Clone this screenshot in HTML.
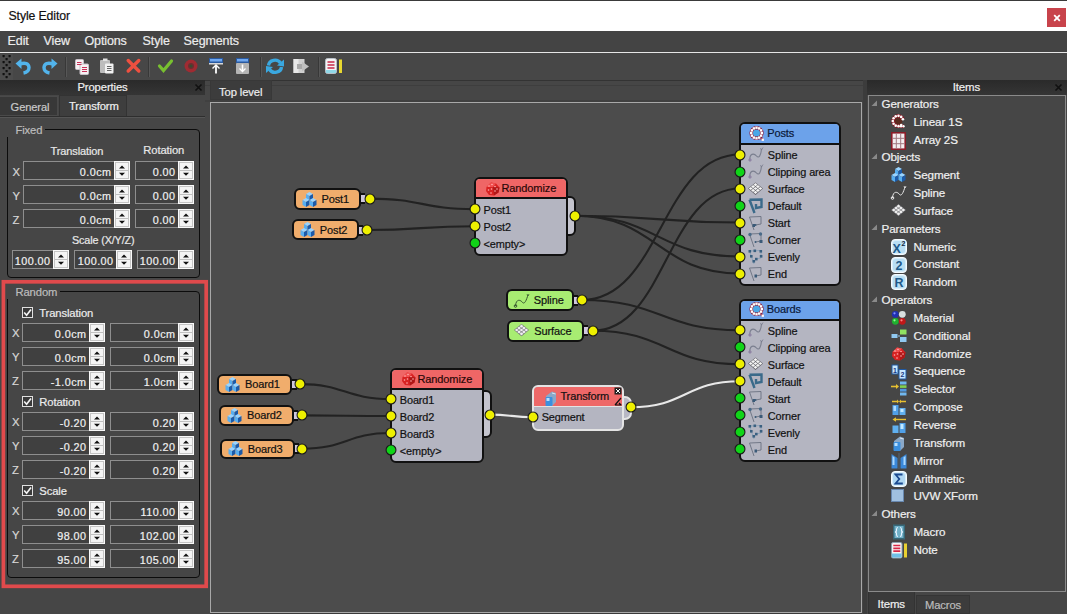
<!DOCTYPE html>
<html><head><meta charset="utf-8"><style>
html,body{margin:0;padding:0;}
body{width:1067px;height:614px;overflow:hidden;position:relative;background:#464646;font-family:"Liberation Sans", sans-serif;}
.t{position:absolute;white-space:nowrap;line-height:1;}
div{box-sizing:border-box;}
svg{position:absolute;overflow:visible;}
</style></head><body>

<div style="position:absolute;left:0px;top:0px;width:1067px;height:31px;background:#ffffff;border-top:1px solid #3a3a3a;"></div>
<div class="t" style="left:8.5px;top:9.8px;font-size:12.30px;letter-spacing:-0.12px;-webkit-text-stroke:0.2px #111;color:#111;">Style Editor</div>
<div style="position:absolute;left:1047px;top:8px;width:19px;height:19px;background:#c8434b;"></div>
<svg style="left:1053px;top:14px" width="8" height="8"><path d="M1.2 1.2L6.8 6.8M6.8 1.2L1.2 6.8" stroke="#fff" stroke-width="1.8"/></svg>
<div style="position:absolute;left:0px;top:31px;width:1067px;height:21px;background:#444444;"></div>
<div class="t" style="left:7.6px;top:35.0px;font-size:12.51px;letter-spacing:-0.12px;-webkit-text-stroke:0.2px #ececec;color:#ececec;">Edit</div>
<div class="t" style="left:43.5px;top:35.0px;font-size:12.51px;letter-spacing:-0.12px;-webkit-text-stroke:0.2px #ececec;color:#ececec;">View</div>
<div class="t" style="left:84.5px;top:35.0px;font-size:12.51px;letter-spacing:-0.12px;-webkit-text-stroke:0.2px #ececec;color:#ececec;">Options</div>
<div class="t" style="left:142.6px;top:35.0px;font-size:12.51px;letter-spacing:-0.12px;-webkit-text-stroke:0.2px #ececec;color:#ececec;">Style</div>
<div class="t" style="left:183.6px;top:35.0px;font-size:12.51px;letter-spacing:-0.12px;-webkit-text-stroke:0.2px #ececec;color:#ececec;">Segments</div>
<div style="position:absolute;left:0px;top:52px;width:1067px;height:1px;background:#e6e6e6;"></div>
<div style="position:absolute;left:0px;top:53px;width:1067px;height:27px;background:#474747;"></div>
<svg style="left:0px;top:54px" width="14" height="26"><rect x="0" y="0" width="13" height="26" fill="#4c4c4c"/><rect x="2.5" y="1" width="2.2" height="2.2" rx="0.6" fill="#111"/><rect x="8.5" y="1" width="2.2" height="2.2" rx="0.6" fill="#111"/><rect x="5.5" y="4" width="2.2" height="2.2" rx="0.6" fill="#111"/><rect x="2.5" y="7" width="2.2" height="2.2" rx="0.6" fill="#111"/><rect x="8.5" y="7" width="2.2" height="2.2" rx="0.6" fill="#111"/><rect x="5.5" y="10" width="2.2" height="2.2" rx="0.6" fill="#111"/><rect x="2.5" y="13" width="2.2" height="2.2" rx="0.6" fill="#111"/><rect x="8.5" y="13" width="2.2" height="2.2" rx="0.6" fill="#111"/><rect x="5.5" y="16" width="2.2" height="2.2" rx="0.6" fill="#111"/><rect x="2.5" y="19" width="2.2" height="2.2" rx="0.6" fill="#111"/><rect x="8.5" y="19" width="2.2" height="2.2" rx="0.6" fill="#111"/><rect x="5.5" y="22" width="2.2" height="2.2" rx="0.6" fill="#111"/></svg>
<div style="position:absolute;left:65px;top:57px;width:1px;height:20px;background:#383838;"></div>
<div style="position:absolute;left:66px;top:57px;width:1px;height:20px;background:#575757;"></div>
<div style="position:absolute;left:148px;top:57px;width:1px;height:20px;background:#383838;"></div>
<div style="position:absolute;left:149px;top:57px;width:1px;height:20px;background:#575757;"></div>
<div style="position:absolute;left:260px;top:57px;width:1px;height:20px;background:#383838;"></div>
<div style="position:absolute;left:261px;top:57px;width:1px;height:20px;background:#575757;"></div>
<div style="position:absolute;left:318px;top:57px;width:1px;height:20px;background:#383838;"></div>
<div style="position:absolute;left:319px;top:57px;width:1px;height:20px;background:#575757;"></div>
<svg style="left:15px;top:58px" width="17" height="17"><path d="M4.5 6 Q13.5 3.5 14 9.5 Q14 14 8.5 15" fill="none" stroke="#52b4ec" stroke-width="3.4"/><path d="M0.5 5.5 L6.5 0.5 L6.5 11 Z" fill="#52b4ec"/></svg>
<svg style="left:41px;top:58px" width="17" height="17"><path d="M12.5 6 Q3.5 3.5 3 9.5 Q3 14 8.5 15" fill="none" stroke="#52b4ec" stroke-width="3.4"/><path d="M16.5 5.5 L10.5 0.5 L10.5 11 Z" fill="#52b4ec"/></svg>
<svg style="left:75px;top:59px" width="14" height="16"><rect x="0.5" y="0.5" width="8" height="10" rx="1" fill="#f6f2f4" stroke="#c8c0c8"/><rect x="5" y="5" width="8.5" height="10.5" rx="1" fill="#f6f2f4" stroke="#c8c0c8"/><path d="M2 3.5h4.5M2 5.5h4.5M7 8.5h5M7 10.5h5M7 12.5h5" stroke="#c83058" stroke-width="1.1"/></svg>
<svg style="left:99px;top:58px" width="16" height="17"><rect x="1" y="2" width="10" height="13" rx="1" fill="#bdbdbd"/><rect x="4" y="0.5" width="4.5" height="2.5" fill="#e0e0e0"/><rect x="6" y="5.5" width="8.5" height="10" rx="1" fill="#f2f2f2"/><path d="M8 8.5h4.5M8 10.5h4.5M8 12.5h4.5" stroke="#555" stroke-width="0.9"/></svg>
<svg style="left:126px;top:58px" width="15" height="15"><path d="M2.2 2.5 L12.8 13 M12.8 2.5 L2.2 13" stroke="#ee5040" stroke-width="3.4" stroke-linecap="round"/></svg>
<svg style="left:158px;top:59px" width="15" height="14"><path d="M1.5 7 L5.5 11.5 L13.5 2" fill="none" stroke="#78c030" stroke-width="3.2" stroke-linecap="round"/></svg>
<svg style="left:183px;top:58px" width="16" height="16"><circle cx="8" cy="8" r="6.5" fill="#a82830" opacity="0.9"/><circle cx="8" cy="8" r="3" fill="#6a3030"/><circle cx="8" cy="8" r="1.5" fill="#3a4a30"/></svg>
<svg style="left:209px;top:58px" width="14" height="16"><rect x="0" y="0" width="14" height="5" fill="#2a5aa0"/><rect x="1" y="1" width="12" height="2.5" fill="#70a8f0"/><rect x="0" y="5" width="14" height="1.5" fill="#d8d8d8"/><path d="M7 8 V15.5" stroke="#fff" stroke-width="1.8"/><path d="M3.5 10.5 L7 7 L10.5 10.5" stroke="#fff" stroke-width="1.4" fill="none"/></svg>
<svg style="left:236px;top:58px" width="13" height="16"><rect x="0" y="0" width="13" height="5" fill="#2a5aa0"/><rect x="1" y="1" width="11" height="2.5" fill="#70a8f0"/><rect x="0" y="5" width="13" height="11" rx="1" fill="#b4b4b4"/><path d="M6.5 6.5 V13" stroke="#fff" stroke-width="1.6"/><path d="M3.5 10.5 L6.5 13.5 L9.5 10.5" stroke="#fff" stroke-width="1.3" fill="none"/></svg>
<svg style="left:265px;top:57px" width="20" height="18"><path d="M3.5 8.5 A6.5 6 0 0 1 15.5 6" fill="none" stroke="#3aa8e0" stroke-width="3.4"/><path d="M16.5 10 A6.5 6 0 0 1 4.5 12.5" fill="none" stroke="#3aa8e0" stroke-width="3.4"/><path d="M19 2.5 L19 9.5 L12 8.5 Z" fill="#3aa8e0"/><path d="M1 16 L1 9 L8 10 Z" fill="#3aa8e0"/></svg>
<svg style="left:293px;top:58px" width="18" height="17"><rect x="0.5" y="1" width="11" height="14" fill="#d0d0d0"/><rect x="0.5" y="1" width="5" height="14" fill="#e8e8e8"/><rect x="4" y="6" width="5" height="5" fill="#a8a8a8"/><path d="M9 3.5 L16 8.5 L9 13.5 Z" fill="#c0c0c0"/></svg>
<svg style="left:325px;top:58px" width="18" height="17"><rect x="0.5" y="0.5" width="11" height="15" rx="2" fill="#f4f4f4" stroke="#b8c0c8"/><path d="M2.5 4h7M2.5 7h7M2.5 10h7" stroke="#c82848" stroke-width="1.7"/><rect x="1" y="12" width="10" height="3" fill="#90d8e8"/><rect x="14" y="1.5" width="3" height="13.5" fill="#e8d830"/></svg>
<div style="position:absolute;left:0px;top:80px;width:205px;height:15px;background:linear-gradient(#2a2a2a,#353535);"></div>
<div class="t" style="left:77.5px;top:82.1px;font-size:11.24px;letter-spacing:-0.12px;-webkit-text-stroke:0.2px #f0f0f0;color:#f0f0f0;">Properties</div>
<svg style="left:195px;top:84px" width="7" height="7"><path d="M0.5 0.5L6.5 6.5M6.5 0.5L0.5 6.5" stroke="#111" stroke-width="1.6"/></svg>
<div style="position:absolute;left:0px;top:96px;width:58px;height:20px;background:#383838;border:1px solid #4a4a4a;border-left:none;"></div>
<div class="t" style="left:10.6px;top:101.9px;font-size:11.13px;letter-spacing:-0.12px;-webkit-text-stroke:0.2px #c8c8c8;color:#c8c8c8;">General</div>
<div style="position:absolute;left:59px;top:95px;width:68px;height:22px;background:#3e3e3e;border:1px solid #333;"></div>
<div class="t" style="left:69.0px;top:100.8px;font-size:11.24px;letter-spacing:-0.12px;-webkit-text-stroke:0.2px #f0f0f0;color:#f0f0f0;">Transform</div>
<div style="position:absolute;left:0px;top:116px;width:205px;height:1px;background:#2e2e2e;"></div>
<div style="position:absolute;left:0px;top:117px;width:205px;height:1px;background:#555555;"></div>
<div style="position:absolute;left:7px;top:129px;width:193px;height:149px;border:1px solid #0c0c0c;border-radius:4px;"></div>
<div class="t" style="left:15.4px;top:124.5px;font-size:11.24px;letter-spacing:-0.12px;-webkit-text-stroke:0.2px #bdbdbd;color:#bdbdbd;background:#464646;padding:1px 3px 1px 9px;margin-left:-9px;margin-top:-1px;">Fixed</div>
<div class="t" style="left:50.6px;top:145.7px;font-size:11.02px;letter-spacing:-0.12px;-webkit-text-stroke:0.2px #e8e8e8;color:#e8e8e8;">Translation</div>
<div class="t" style="left:143.3px;top:145.3px;font-size:11.24px;letter-spacing:-0.12px;-webkit-text-stroke:0.2px #e8e8e8;color:#e8e8e8;">Rotation</div>
<div class="t" style="left:12.5px;top:166.5px;font-size:11.24px;letter-spacing:-0.12px;-webkit-text-stroke:0.2px #d8d8d8;color:#d8d8d8;">X</div>
<div style="position:absolute;left:23px;top:161px;width:107px;height:19px;background:#404040;border:1px solid #8e8e8e;"></div>
<div style="position:absolute;left:114px;top:161px;width:16px;height:19px;background:#f4f4f4;border:1px solid #fafafa;"></div>
<div style="position:absolute;left:115px;top:162px;width:14px;height:17px;border:1px solid #c4c4c4;"></div>
<div style="position:absolute;left:116px;top:170px;width:12px;height:1px;background:#c0c0c0;"></div>
<svg style="left:119px;top:165px" width="6" height="12"><path d="M0 3.6 L3 0.6 L6 3.6 Z M0 7.8 L3 10.8 L6 7.8 Z" fill="#111"/></svg>
<div class="t" style="right:955.5px;top:167.2px;font-size:10.8px;letter-spacing:0.45px;-webkit-text-stroke:0.2px #f0f0f0;color:#f0f0f0;">0.0cm</div>
<div style="position:absolute;left:135px;top:161px;width:59px;height:19px;background:#404040;border:1px solid #8e8e8e;"></div>
<div style="position:absolute;left:178px;top:161px;width:16px;height:19px;background:#f4f4f4;border:1px solid #fafafa;"></div>
<div style="position:absolute;left:179px;top:162px;width:14px;height:17px;border:1px solid #c4c4c4;"></div>
<div style="position:absolute;left:180px;top:170px;width:12px;height:1px;background:#c0c0c0;"></div>
<svg style="left:183px;top:165px" width="6" height="12"><path d="M0 3.6 L3 0.6 L6 3.6 Z M0 7.8 L3 10.8 L6 7.8 Z" fill="#111"/></svg>
<div class="t" style="right:891.5px;top:167.2px;font-size:10.8px;letter-spacing:0.45px;-webkit-text-stroke:0.2px #f0f0f0;color:#f0f0f0;">0.00</div>
<div class="t" style="left:12.5px;top:190.5px;font-size:11.24px;letter-spacing:-0.12px;-webkit-text-stroke:0.2px #d8d8d8;color:#d8d8d8;">Y</div>
<div style="position:absolute;left:23px;top:185px;width:107px;height:19px;background:#404040;border:1px solid #8e8e8e;"></div>
<div style="position:absolute;left:114px;top:185px;width:16px;height:19px;background:#f4f4f4;border:1px solid #fafafa;"></div>
<div style="position:absolute;left:115px;top:186px;width:14px;height:17px;border:1px solid #c4c4c4;"></div>
<div style="position:absolute;left:116px;top:194px;width:12px;height:1px;background:#c0c0c0;"></div>
<svg style="left:119px;top:189px" width="6" height="12"><path d="M0 3.6 L3 0.6 L6 3.6 Z M0 7.8 L3 10.8 L6 7.8 Z" fill="#111"/></svg>
<div class="t" style="right:955.5px;top:191.2px;font-size:10.8px;letter-spacing:0.45px;-webkit-text-stroke:0.2px #f0f0f0;color:#f0f0f0;">0.0cm</div>
<div style="position:absolute;left:135px;top:185px;width:59px;height:19px;background:#404040;border:1px solid #8e8e8e;"></div>
<div style="position:absolute;left:178px;top:185px;width:16px;height:19px;background:#f4f4f4;border:1px solid #fafafa;"></div>
<div style="position:absolute;left:179px;top:186px;width:14px;height:17px;border:1px solid #c4c4c4;"></div>
<div style="position:absolute;left:180px;top:194px;width:12px;height:1px;background:#c0c0c0;"></div>
<svg style="left:183px;top:189px" width="6" height="12"><path d="M0 3.6 L3 0.6 L6 3.6 Z M0 7.8 L3 10.8 L6 7.8 Z" fill="#111"/></svg>
<div class="t" style="right:891.5px;top:191.2px;font-size:10.8px;letter-spacing:0.45px;-webkit-text-stroke:0.2px #f0f0f0;color:#f0f0f0;">0.00</div>
<div class="t" style="left:12.5px;top:214.5px;font-size:11.24px;letter-spacing:-0.12px;-webkit-text-stroke:0.2px #d8d8d8;color:#d8d8d8;">Z</div>
<div style="position:absolute;left:23px;top:209px;width:107px;height:19px;background:#404040;border:1px solid #8e8e8e;"></div>
<div style="position:absolute;left:114px;top:209px;width:16px;height:19px;background:#f4f4f4;border:1px solid #fafafa;"></div>
<div style="position:absolute;left:115px;top:210px;width:14px;height:17px;border:1px solid #c4c4c4;"></div>
<div style="position:absolute;left:116px;top:218px;width:12px;height:1px;background:#c0c0c0;"></div>
<svg style="left:119px;top:213px" width="6" height="12"><path d="M0 3.6 L3 0.6 L6 3.6 Z M0 7.8 L3 10.8 L6 7.8 Z" fill="#111"/></svg>
<div class="t" style="right:955.5px;top:215.2px;font-size:10.8px;letter-spacing:0.45px;-webkit-text-stroke:0.2px #f0f0f0;color:#f0f0f0;">0.0cm</div>
<div style="position:absolute;left:135px;top:209px;width:59px;height:19px;background:#404040;border:1px solid #8e8e8e;"></div>
<div style="position:absolute;left:178px;top:209px;width:16px;height:19px;background:#f4f4f4;border:1px solid #fafafa;"></div>
<div style="position:absolute;left:179px;top:210px;width:14px;height:17px;border:1px solid #c4c4c4;"></div>
<div style="position:absolute;left:180px;top:218px;width:12px;height:1px;background:#c0c0c0;"></div>
<svg style="left:183px;top:213px" width="6" height="12"><path d="M0 3.6 L3 0.6 L6 3.6 Z M0 7.8 L3 10.8 L6 7.8 Z" fill="#111"/></svg>
<div class="t" style="right:891.5px;top:215.2px;font-size:10.8px;letter-spacing:0.45px;-webkit-text-stroke:0.2px #f0f0f0;color:#f0f0f0;">0.00</div>
<div class="t" style="left:71.9px;top:234.5px;font-size:10.81px;letter-spacing:-0.12px;-webkit-text-stroke:0.2px #e8e8e8;color:#e8e8e8;">Scale (X/Y/Z)</div>
<div style="position:absolute;left:12px;top:250px;width:57px;height:19px;background:#404040;border:1px solid #8e8e8e;"></div>
<div style="position:absolute;left:53px;top:250px;width:16px;height:19px;background:#f4f4f4;border:1px solid #fafafa;"></div>
<div style="position:absolute;left:54px;top:251px;width:14px;height:17px;border:1px solid #c4c4c4;"></div>
<div style="position:absolute;left:55px;top:259px;width:12px;height:1px;background:#c0c0c0;"></div>
<svg style="left:58px;top:254px" width="6" height="12"><path d="M0 3.6 L3 0.6 L6 3.6 Z M0 7.8 L3 10.8 L6 7.8 Z" fill="#111"/></svg>
<div class="t" style="right:1016.5px;top:256.2px;font-size:10.8px;letter-spacing:0.45px;-webkit-text-stroke:0.2px #f0f0f0;color:#f0f0f0;">100.00</div>
<div style="position:absolute;left:74px;top:250px;width:58px;height:19px;background:#404040;border:1px solid #8e8e8e;"></div>
<div style="position:absolute;left:116px;top:250px;width:16px;height:19px;background:#f4f4f4;border:1px solid #fafafa;"></div>
<div style="position:absolute;left:117px;top:251px;width:14px;height:17px;border:1px solid #c4c4c4;"></div>
<div style="position:absolute;left:118px;top:259px;width:12px;height:1px;background:#c0c0c0;"></div>
<svg style="left:121px;top:254px" width="6" height="12"><path d="M0 3.6 L3 0.6 L6 3.6 Z M0 7.8 L3 10.8 L6 7.8 Z" fill="#111"/></svg>
<div class="t" style="right:953.5px;top:256.2px;font-size:10.8px;letter-spacing:0.45px;-webkit-text-stroke:0.2px #f0f0f0;color:#f0f0f0;">100.00</div>
<div style="position:absolute;left:137px;top:250px;width:57px;height:19px;background:#404040;border:1px solid #8e8e8e;"></div>
<div style="position:absolute;left:178px;top:250px;width:16px;height:19px;background:#f4f4f4;border:1px solid #fafafa;"></div>
<div style="position:absolute;left:179px;top:251px;width:14px;height:17px;border:1px solid #c4c4c4;"></div>
<div style="position:absolute;left:180px;top:259px;width:12px;height:1px;background:#c0c0c0;"></div>
<svg style="left:183px;top:254px" width="6" height="12"><path d="M0 3.6 L3 0.6 L6 3.6 Z M0 7.8 L3 10.8 L6 7.8 Z" fill="#111"/></svg>
<div class="t" style="right:891.5px;top:256.2px;font-size:10.8px;letter-spacing:0.45px;-webkit-text-stroke:0.2px #f0f0f0;color:#f0f0f0;">100.00</div>
<div style="position:absolute;left:7px;top:291px;width:193px;height:287px;border:1px solid #0c0c0c;border-radius:4px;"></div>
<div class="t" style="left:15.5px;top:287.1px;font-size:11.24px;letter-spacing:-0.12px;-webkit-text-stroke:0.2px #bdbdbd;color:#bdbdbd;background:#464646;padding:1px 3px 1px 9px;margin-left:-9px;margin-top:-1px;">Random</div>
<div style="position:absolute;left:22px;top:307px;width:11px;height:11px;border:1px solid #e0e0e0;background:#3a3a3a;"></div>
<svg style="left:23px;top:308px" width="9" height="9"><path d="M1.2 4.5 L3.6 7.2 L8 1.5" fill="none" stroke="#f4f4f4" stroke-width="1.7"/></svg>
<div class="t" style="left:39.3px;top:308.1px;font-size:11.24px;letter-spacing:-0.12px;-webkit-text-stroke:0.2px #ececec;color:#ececec;">Translation</div>
<div class="t" style="left:12.0px;top:328.3px;font-size:11.24px;letter-spacing:-0.12px;-webkit-text-stroke:0.2px #d8d8d8;color:#d8d8d8;">X</div>
<div style="position:absolute;left:22px;top:323px;width:83px;height:19px;background:#404040;border:1px solid #8e8e8e;"></div>
<div style="position:absolute;left:89px;top:323px;width:16px;height:19px;background:#f4f4f4;border:1px solid #fafafa;"></div>
<div style="position:absolute;left:90px;top:324px;width:14px;height:17px;border:1px solid #c4c4c4;"></div>
<div style="position:absolute;left:91px;top:332px;width:12px;height:1px;background:#c0c0c0;"></div>
<svg style="left:94px;top:327px" width="6" height="12"><path d="M0 3.6 L3 0.6 L6 3.6 Z M0 7.8 L3 10.8 L6 7.8 Z" fill="#111"/></svg>
<div class="t" style="right:980.5px;top:329.2px;font-size:10.8px;letter-spacing:0.45px;-webkit-text-stroke:0.2px #f0f0f0;color:#f0f0f0;">0.0cm</div>
<div style="position:absolute;left:110px;top:323px;width:84px;height:19px;background:#404040;border:1px solid #8e8e8e;"></div>
<div style="position:absolute;left:178px;top:323px;width:16px;height:19px;background:#f4f4f4;border:1px solid #fafafa;"></div>
<div style="position:absolute;left:179px;top:324px;width:14px;height:17px;border:1px solid #c4c4c4;"></div>
<div style="position:absolute;left:180px;top:332px;width:12px;height:1px;background:#c0c0c0;"></div>
<svg style="left:183px;top:327px" width="6" height="12"><path d="M0 3.6 L3 0.6 L6 3.6 Z M0 7.8 L3 10.8 L6 7.8 Z" fill="#111"/></svg>
<div class="t" style="right:891.5px;top:329.2px;font-size:10.8px;letter-spacing:0.45px;-webkit-text-stroke:0.2px #f0f0f0;color:#f0f0f0;">0.0cm</div>
<div class="t" style="left:12.0px;top:352.3px;font-size:11.24px;letter-spacing:-0.12px;-webkit-text-stroke:0.2px #d8d8d8;color:#d8d8d8;">Y</div>
<div style="position:absolute;left:22px;top:347px;width:83px;height:19px;background:#404040;border:1px solid #8e8e8e;"></div>
<div style="position:absolute;left:89px;top:347px;width:16px;height:19px;background:#f4f4f4;border:1px solid #fafafa;"></div>
<div style="position:absolute;left:90px;top:348px;width:14px;height:17px;border:1px solid #c4c4c4;"></div>
<div style="position:absolute;left:91px;top:356px;width:12px;height:1px;background:#c0c0c0;"></div>
<svg style="left:94px;top:351px" width="6" height="12"><path d="M0 3.6 L3 0.6 L6 3.6 Z M0 7.8 L3 10.8 L6 7.8 Z" fill="#111"/></svg>
<div class="t" style="right:980.5px;top:353.2px;font-size:10.8px;letter-spacing:0.45px;-webkit-text-stroke:0.2px #f0f0f0;color:#f0f0f0;">0.0cm</div>
<div style="position:absolute;left:110px;top:347px;width:84px;height:19px;background:#404040;border:1px solid #8e8e8e;"></div>
<div style="position:absolute;left:178px;top:347px;width:16px;height:19px;background:#f4f4f4;border:1px solid #fafafa;"></div>
<div style="position:absolute;left:179px;top:348px;width:14px;height:17px;border:1px solid #c4c4c4;"></div>
<div style="position:absolute;left:180px;top:356px;width:12px;height:1px;background:#c0c0c0;"></div>
<svg style="left:183px;top:351px" width="6" height="12"><path d="M0 3.6 L3 0.6 L6 3.6 Z M0 7.8 L3 10.8 L6 7.8 Z" fill="#111"/></svg>
<div class="t" style="right:891.5px;top:353.2px;font-size:10.8px;letter-spacing:0.45px;-webkit-text-stroke:0.2px #f0f0f0;color:#f0f0f0;">0.0cm</div>
<div class="t" style="left:12.0px;top:376.3px;font-size:11.24px;letter-spacing:-0.12px;-webkit-text-stroke:0.2px #d8d8d8;color:#d8d8d8;">Z</div>
<div style="position:absolute;left:22px;top:371px;width:83px;height:19px;background:#404040;border:1px solid #8e8e8e;"></div>
<div style="position:absolute;left:89px;top:371px;width:16px;height:19px;background:#f4f4f4;border:1px solid #fafafa;"></div>
<div style="position:absolute;left:90px;top:372px;width:14px;height:17px;border:1px solid #c4c4c4;"></div>
<div style="position:absolute;left:91px;top:380px;width:12px;height:1px;background:#c0c0c0;"></div>
<svg style="left:94px;top:375px" width="6" height="12"><path d="M0 3.6 L3 0.6 L6 3.6 Z M0 7.8 L3 10.8 L6 7.8 Z" fill="#111"/></svg>
<div class="t" style="right:980.5px;top:377.2px;font-size:10.8px;letter-spacing:0.45px;-webkit-text-stroke:0.2px #f0f0f0;color:#f0f0f0;">-1.0cm</div>
<div style="position:absolute;left:110px;top:371px;width:84px;height:19px;background:#404040;border:1px solid #8e8e8e;"></div>
<div style="position:absolute;left:178px;top:371px;width:16px;height:19px;background:#f4f4f4;border:1px solid #fafafa;"></div>
<div style="position:absolute;left:179px;top:372px;width:14px;height:17px;border:1px solid #c4c4c4;"></div>
<div style="position:absolute;left:180px;top:380px;width:12px;height:1px;background:#c0c0c0;"></div>
<svg style="left:183px;top:375px" width="6" height="12"><path d="M0 3.6 L3 0.6 L6 3.6 Z M0 7.8 L3 10.8 L6 7.8 Z" fill="#111"/></svg>
<div class="t" style="right:891.5px;top:377.2px;font-size:10.8px;letter-spacing:0.45px;-webkit-text-stroke:0.2px #f0f0f0;color:#f0f0f0;">1.0cm</div>
<div style="position:absolute;left:22px;top:396px;width:11px;height:11px;border:1px solid #e0e0e0;background:#3a3a3a;"></div>
<svg style="left:23px;top:397px" width="9" height="9"><path d="M1.2 4.5 L3.6 7.2 L8 1.5" fill="none" stroke="#f4f4f4" stroke-width="1.7"/></svg>
<div class="t" style="left:39.3px;top:397.1px;font-size:11.24px;letter-spacing:-0.12px;-webkit-text-stroke:0.2px #ececec;color:#ececec;">Rotation</div>
<div class="t" style="left:12.0px;top:417.3px;font-size:11.24px;letter-spacing:-0.12px;-webkit-text-stroke:0.2px #d8d8d8;color:#d8d8d8;">X</div>
<div style="position:absolute;left:22px;top:412px;width:83px;height:19px;background:#404040;border:1px solid #8e8e8e;"></div>
<div style="position:absolute;left:89px;top:412px;width:16px;height:19px;background:#f4f4f4;border:1px solid #fafafa;"></div>
<div style="position:absolute;left:90px;top:413px;width:14px;height:17px;border:1px solid #c4c4c4;"></div>
<div style="position:absolute;left:91px;top:421px;width:12px;height:1px;background:#c0c0c0;"></div>
<svg style="left:94px;top:416px" width="6" height="12"><path d="M0 3.6 L3 0.6 L6 3.6 Z M0 7.8 L3 10.8 L6 7.8 Z" fill="#111"/></svg>
<div class="t" style="right:980.5px;top:418.2px;font-size:10.8px;letter-spacing:0.45px;-webkit-text-stroke:0.2px #f0f0f0;color:#f0f0f0;">-0.20</div>
<div style="position:absolute;left:110px;top:412px;width:84px;height:19px;background:#404040;border:1px solid #8e8e8e;"></div>
<div style="position:absolute;left:178px;top:412px;width:16px;height:19px;background:#f4f4f4;border:1px solid #fafafa;"></div>
<div style="position:absolute;left:179px;top:413px;width:14px;height:17px;border:1px solid #c4c4c4;"></div>
<div style="position:absolute;left:180px;top:421px;width:12px;height:1px;background:#c0c0c0;"></div>
<svg style="left:183px;top:416px" width="6" height="12"><path d="M0 3.6 L3 0.6 L6 3.6 Z M0 7.8 L3 10.8 L6 7.8 Z" fill="#111"/></svg>
<div class="t" style="right:891.5px;top:418.2px;font-size:10.8px;letter-spacing:0.45px;-webkit-text-stroke:0.2px #f0f0f0;color:#f0f0f0;">0.20</div>
<div class="t" style="left:12.0px;top:441.3px;font-size:11.24px;letter-spacing:-0.12px;-webkit-text-stroke:0.2px #d8d8d8;color:#d8d8d8;">Y</div>
<div style="position:absolute;left:22px;top:436px;width:83px;height:19px;background:#404040;border:1px solid #8e8e8e;"></div>
<div style="position:absolute;left:89px;top:436px;width:16px;height:19px;background:#f4f4f4;border:1px solid #fafafa;"></div>
<div style="position:absolute;left:90px;top:437px;width:14px;height:17px;border:1px solid #c4c4c4;"></div>
<div style="position:absolute;left:91px;top:445px;width:12px;height:1px;background:#c0c0c0;"></div>
<svg style="left:94px;top:440px" width="6" height="12"><path d="M0 3.6 L3 0.6 L6 3.6 Z M0 7.8 L3 10.8 L6 7.8 Z" fill="#111"/></svg>
<div class="t" style="right:980.5px;top:442.2px;font-size:10.8px;letter-spacing:0.45px;-webkit-text-stroke:0.2px #f0f0f0;color:#f0f0f0;">-0.20</div>
<div style="position:absolute;left:110px;top:436px;width:84px;height:19px;background:#404040;border:1px solid #8e8e8e;"></div>
<div style="position:absolute;left:178px;top:436px;width:16px;height:19px;background:#f4f4f4;border:1px solid #fafafa;"></div>
<div style="position:absolute;left:179px;top:437px;width:14px;height:17px;border:1px solid #c4c4c4;"></div>
<div style="position:absolute;left:180px;top:445px;width:12px;height:1px;background:#c0c0c0;"></div>
<svg style="left:183px;top:440px" width="6" height="12"><path d="M0 3.6 L3 0.6 L6 3.6 Z M0 7.8 L3 10.8 L6 7.8 Z" fill="#111"/></svg>
<div class="t" style="right:891.5px;top:442.2px;font-size:10.8px;letter-spacing:0.45px;-webkit-text-stroke:0.2px #f0f0f0;color:#f0f0f0;">0.20</div>
<div class="t" style="left:12.0px;top:465.3px;font-size:11.24px;letter-spacing:-0.12px;-webkit-text-stroke:0.2px #d8d8d8;color:#d8d8d8;">Z</div>
<div style="position:absolute;left:22px;top:460px;width:83px;height:19px;background:#404040;border:1px solid #8e8e8e;"></div>
<div style="position:absolute;left:89px;top:460px;width:16px;height:19px;background:#f4f4f4;border:1px solid #fafafa;"></div>
<div style="position:absolute;left:90px;top:461px;width:14px;height:17px;border:1px solid #c4c4c4;"></div>
<div style="position:absolute;left:91px;top:469px;width:12px;height:1px;background:#c0c0c0;"></div>
<svg style="left:94px;top:464px" width="6" height="12"><path d="M0 3.6 L3 0.6 L6 3.6 Z M0 7.8 L3 10.8 L6 7.8 Z" fill="#111"/></svg>
<div class="t" style="right:980.5px;top:466.2px;font-size:10.8px;letter-spacing:0.45px;-webkit-text-stroke:0.2px #f0f0f0;color:#f0f0f0;">-0.20</div>
<div style="position:absolute;left:110px;top:460px;width:84px;height:19px;background:#404040;border:1px solid #8e8e8e;"></div>
<div style="position:absolute;left:178px;top:460px;width:16px;height:19px;background:#f4f4f4;border:1px solid #fafafa;"></div>
<div style="position:absolute;left:179px;top:461px;width:14px;height:17px;border:1px solid #c4c4c4;"></div>
<div style="position:absolute;left:180px;top:469px;width:12px;height:1px;background:#c0c0c0;"></div>
<svg style="left:183px;top:464px" width="6" height="12"><path d="M0 3.6 L3 0.6 L6 3.6 Z M0 7.8 L3 10.8 L6 7.8 Z" fill="#111"/></svg>
<div class="t" style="right:891.5px;top:466.2px;font-size:10.8px;letter-spacing:0.45px;-webkit-text-stroke:0.2px #f0f0f0;color:#f0f0f0;">0.20</div>
<div style="position:absolute;left:22px;top:485px;width:11px;height:11px;border:1px solid #e0e0e0;background:#3a3a3a;"></div>
<svg style="left:23px;top:486px" width="9" height="9"><path d="M1.2 4.5 L3.6 7.2 L8 1.5" fill="none" stroke="#f4f4f4" stroke-width="1.7"/></svg>
<div class="t" style="left:39.3px;top:486.1px;font-size:11.24px;letter-spacing:-0.12px;-webkit-text-stroke:0.2px #ececec;color:#ececec;">Scale</div>
<div class="t" style="left:12.0px;top:506.3px;font-size:11.24px;letter-spacing:-0.12px;-webkit-text-stroke:0.2px #d8d8d8;color:#d8d8d8;">X</div>
<div style="position:absolute;left:22px;top:501px;width:83px;height:19px;background:#404040;border:1px solid #8e8e8e;"></div>
<div style="position:absolute;left:89px;top:501px;width:16px;height:19px;background:#f4f4f4;border:1px solid #fafafa;"></div>
<div style="position:absolute;left:90px;top:502px;width:14px;height:17px;border:1px solid #c4c4c4;"></div>
<div style="position:absolute;left:91px;top:510px;width:12px;height:1px;background:#c0c0c0;"></div>
<svg style="left:94px;top:505px" width="6" height="12"><path d="M0 3.6 L3 0.6 L6 3.6 Z M0 7.8 L3 10.8 L6 7.8 Z" fill="#111"/></svg>
<div class="t" style="right:980.5px;top:507.2px;font-size:10.8px;letter-spacing:0.45px;-webkit-text-stroke:0.2px #f0f0f0;color:#f0f0f0;">90.00</div>
<div style="position:absolute;left:110px;top:501px;width:84px;height:19px;background:#404040;border:1px solid #8e8e8e;"></div>
<div style="position:absolute;left:178px;top:501px;width:16px;height:19px;background:#f4f4f4;border:1px solid #fafafa;"></div>
<div style="position:absolute;left:179px;top:502px;width:14px;height:17px;border:1px solid #c4c4c4;"></div>
<div style="position:absolute;left:180px;top:510px;width:12px;height:1px;background:#c0c0c0;"></div>
<svg style="left:183px;top:505px" width="6" height="12"><path d="M0 3.6 L3 0.6 L6 3.6 Z M0 7.8 L3 10.8 L6 7.8 Z" fill="#111"/></svg>
<div class="t" style="right:891.5px;top:507.2px;font-size:10.8px;letter-spacing:0.45px;-webkit-text-stroke:0.2px #f0f0f0;color:#f0f0f0;">110.00</div>
<div class="t" style="left:12.0px;top:530.3px;font-size:11.24px;letter-spacing:-0.12px;-webkit-text-stroke:0.2px #d8d8d8;color:#d8d8d8;">Y</div>
<div style="position:absolute;left:22px;top:525px;width:83px;height:19px;background:#404040;border:1px solid #8e8e8e;"></div>
<div style="position:absolute;left:89px;top:525px;width:16px;height:19px;background:#f4f4f4;border:1px solid #fafafa;"></div>
<div style="position:absolute;left:90px;top:526px;width:14px;height:17px;border:1px solid #c4c4c4;"></div>
<div style="position:absolute;left:91px;top:534px;width:12px;height:1px;background:#c0c0c0;"></div>
<svg style="left:94px;top:529px" width="6" height="12"><path d="M0 3.6 L3 0.6 L6 3.6 Z M0 7.8 L3 10.8 L6 7.8 Z" fill="#111"/></svg>
<div class="t" style="right:980.5px;top:531.2px;font-size:10.8px;letter-spacing:0.45px;-webkit-text-stroke:0.2px #f0f0f0;color:#f0f0f0;">98.00</div>
<div style="position:absolute;left:110px;top:525px;width:84px;height:19px;background:#404040;border:1px solid #8e8e8e;"></div>
<div style="position:absolute;left:178px;top:525px;width:16px;height:19px;background:#f4f4f4;border:1px solid #fafafa;"></div>
<div style="position:absolute;left:179px;top:526px;width:14px;height:17px;border:1px solid #c4c4c4;"></div>
<div style="position:absolute;left:180px;top:534px;width:12px;height:1px;background:#c0c0c0;"></div>
<svg style="left:183px;top:529px" width="6" height="12"><path d="M0 3.6 L3 0.6 L6 3.6 Z M0 7.8 L3 10.8 L6 7.8 Z" fill="#111"/></svg>
<div class="t" style="right:891.5px;top:531.2px;font-size:10.8px;letter-spacing:0.45px;-webkit-text-stroke:0.2px #f0f0f0;color:#f0f0f0;">102.00</div>
<div class="t" style="left:12.0px;top:554.3px;font-size:11.24px;letter-spacing:-0.12px;-webkit-text-stroke:0.2px #d8d8d8;color:#d8d8d8;">Z</div>
<div style="position:absolute;left:22px;top:549px;width:83px;height:19px;background:#404040;border:1px solid #8e8e8e;"></div>
<div style="position:absolute;left:89px;top:549px;width:16px;height:19px;background:#f4f4f4;border:1px solid #fafafa;"></div>
<div style="position:absolute;left:90px;top:550px;width:14px;height:17px;border:1px solid #c4c4c4;"></div>
<div style="position:absolute;left:91px;top:558px;width:12px;height:1px;background:#c0c0c0;"></div>
<svg style="left:94px;top:553px" width="6" height="12"><path d="M0 3.6 L3 0.6 L6 3.6 Z M0 7.8 L3 10.8 L6 7.8 Z" fill="#111"/></svg>
<div class="t" style="right:980.5px;top:555.2px;font-size:10.8px;letter-spacing:0.45px;-webkit-text-stroke:0.2px #f0f0f0;color:#f0f0f0;">95.00</div>
<div style="position:absolute;left:110px;top:549px;width:84px;height:19px;background:#404040;border:1px solid #8e8e8e;"></div>
<div style="position:absolute;left:178px;top:549px;width:16px;height:19px;background:#f4f4f4;border:1px solid #fafafa;"></div>
<div style="position:absolute;left:179px;top:550px;width:14px;height:17px;border:1px solid #c4c4c4;"></div>
<div style="position:absolute;left:180px;top:558px;width:12px;height:1px;background:#c0c0c0;"></div>
<svg style="left:183px;top:553px" width="6" height="12"><path d="M0 3.6 L3 0.6 L6 3.6 Z M0 7.8 L3 10.8 L6 7.8 Z" fill="#111"/></svg>
<div class="t" style="right:891.5px;top:555.2px;font-size:10.8px;letter-spacing:0.45px;-webkit-text-stroke:0.2px #f0f0f0;color:#f0f0f0;">105.00</div>
<svg style="left:0;top:0" width="1067" height="614"><rect x="3.4" y="281.8" width="202.8" height="304.5" fill="none" stroke="#e04a4c" stroke-width="3.7"/></svg>
<div style="position:absolute;left:205px;top:80px;width:662px;height:1px;background:#333;"></div>
<div style="position:absolute;left:205px;top:85px;width:662px;height:1px;background:#3e3e3e;"></div>
<div style="position:absolute;left:205px;top:100px;width:662px;height:2px;background:#404040;"></div>
<div style="position:absolute;left:210px;top:80px;width:62px;height:20px;background:#3c3c3c;border:1px solid #383838;"></div>
<div class="t" style="left:219.1px;top:86.5px;font-size:11.24px;letter-spacing:-0.12px;-webkit-text-stroke:0.2px #ececec;color:#ececec;">Top level</div>
<div style="position:absolute;left:210px;top:102px;width:652px;height:511px;background:#4c4c4c;border:1px solid #a8a8a8;"></div>
<div style="position:absolute;left:210px;top:613px;width:652px;height:1px;background:#3a3a3a;"></div>
<div style="position:absolute;left:863px;top:80px;width:4px;height:534px;background:#3c3c3c;"></div>
<div style="position:absolute;left:867px;top:80px;width:200px;height:15px;background:linear-gradient(#2a2a2a,#353535);"></div>
<div class="t" style="left:952.7px;top:81.9px;font-size:11.45px;letter-spacing:-0.12px;-webkit-text-stroke:0.2px #f0f0f0;color:#f0f0f0;">Items</div>
<svg style="left:1055px;top:84px" width="7" height="7"><path d="M0.5 0.5L6.5 6.5M6.5 0.5L0.5 6.5" stroke="#111" stroke-width="1.6"/></svg>
<div style="position:absolute;left:868px;top:95px;width:198px;height:497px;background:#464646;border:1px solid #8a8a8a;"></div>
<div style="position:absolute;left:868px;top:592px;width:47px;height:22px;background:#3a3a3a;border:1px solid #333;border-top:none;"></div>
<div class="t" style="left:877.6px;top:598.8px;font-size:11.45px;letter-spacing:-0.12px;-webkit-text-stroke:0.2px #f0f0f0;color:#f0f0f0;">Items</div>
<div style="position:absolute;left:916px;top:595px;width:54px;height:19px;background:#3c3c3c;border:1px solid #353535;"></div>
<div class="t" style="left:925.0px;top:599.7px;font-size:11.24px;letter-spacing:-0.12px;-webkit-text-stroke:0.2px #bcbcbc;color:#bcbcbc;">Macros</div>
<svg style="left:870.5px;top:99.5px" width="7" height="7"><path d="M6 0.5 L6 6 L0.5 6 Z" fill="#8a8a8a"/></svg>
<div class="t" style="left:881.5px;top:97.8px;font-size:11.66px;letter-spacing:-0.12px;-webkit-text-stroke:0.2px #f0f0f0;color:#f0f0f0;">Generators</div>
<svg style="left:891.0px;top:113.8px" width="15" height="15"><g transform="scale(1.0)"><circle cx="7" cy="7" r="4.5" fill="#5a2a20"/><path d="M12 5 A5.2 5.2 0 1 0 8 12.2 L13 12.2" fill="none" stroke="#8a1c28" stroke-width="3.6"/><circle cx="11.89" cy="5.22" r="1.3" fill="#fff"/><circle cx="10.20" cy="2.90" r="1.3" fill="#fff"/><circle cx="7.54" cy="1.83" r="1.3" fill="#fff"/><circle cx="4.72" cy="2.33" r="1.3" fill="#fff"/><circle cx="2.59" cy="4.24" r="1.3" fill="#fff"/><circle cx="1.80" cy="7.00" r="1.3" fill="#fff"/><circle cx="2.59" cy="9.76" r="1.3" fill="#fff"/><circle cx="4.72" cy="11.67" r="1.3" fill="#fff"/><circle cx="7.54" cy="12.17" r="1.3" fill="#fff"/><circle cx="10.20" cy="11.10" r="1.3" fill="#fff"/><circle cx="10" cy="12.2" r="1.2" fill="#fff"/><circle cx="12.5" cy="12.2" r="1.2" fill="#fff"/></g></svg>
<div class="t" style="left:913.5px;top:115.7px;font-size:11.66px;letter-spacing:-0.12px;-webkit-text-stroke:0.2px #f0f0f0;color:#f0f0f0;">Linear 1S</div>
<svg style="left:891.0px;top:131.7px" width="15" height="18"><rect x="0.8" y="0.8" width="13.4" height="16.4" fill="#f4eef0" stroke="#8a1c28" stroke-width="1.6"/><path d="M5.3 1V17M9.7 1V17M1 6.3H14M1 11.7H14" stroke="#a07880" stroke-width="1"/></svg>
<div class="t" style="left:913.5px;top:133.5px;font-size:11.66px;letter-spacing:-0.12px;-webkit-text-stroke:0.2px #f0f0f0;color:#f0f0f0;">Array 2S</div>
<svg style="left:870.5px;top:153.0px" width="7" height="7"><path d="M6 0.5 L6 6 L0.5 6 Z" fill="#8a8a8a"/></svg>
<div class="t" style="left:881.5px;top:151.3px;font-size:11.66px;letter-spacing:-0.12px;-webkit-text-stroke:0.2px #f0f0f0;color:#f0f0f0;">Objects</div>
<svg style="left:891.0px;top:167.4px" width="16" height="16"><g transform="scale(1.0)"><path d="M4 2 L7.5 0 L11 2 L7.5 4 Z" fill="#9ad4ff"/><path d="M4 2 L7.5 4 L7.5 9 L4 7 Z" fill="#58aef0"/><path d="M11 2 L7.5 4 L7.5 9 L11 7 Z" fill="#1c5aa8"/><path d="M0.5 8 L4.0 6 L7.5 8 L4.0 10 Z" fill="#9ad4ff"/><path d="M0.5 8 L4.0 10 L4.0 15 L0.5 13 Z" fill="#58aef0"/><path d="M7.5 8 L4.0 10 L4.0 15 L7.5 13 Z" fill="#1c5aa8"/><path d="M7.5 8 L11.0 6 L14.5 8 L11.0 10 Z" fill="#9ad4ff"/><path d="M7.5 8 L11.0 10 L11.0 15 L7.5 13 Z" fill="#58aef0"/><path d="M14.5 8 L11.0 10 L11.0 15 L14.5 13 Z" fill="#1c5aa8"/></g></svg>
<div class="t" style="left:913.5px;top:169.2px;font-size:11.66px;letter-spacing:-0.12px;-webkit-text-stroke:0.2px #f0f0f0;color:#f0f0f0;">Segment</div>
<svg style="left:891.0px;top:185.2px" width="16" height="16"><path d="M1.5 13 C2 5 7 7 8.5 9.5 C11 12 13 5 14 2" fill="none" stroke="#e8e8e8" stroke-width="1"/><circle cx="1.5" cy="13" r="1.3" fill="none" stroke="#e8e8e8"/><path d="M13 1 L14 3 L15 1" stroke="#e8e8e8" fill="none" stroke-width="0.8"/></svg>
<div class="t" style="left:913.5px;top:187.0px;font-size:11.66px;letter-spacing:-0.12px;-webkit-text-stroke:0.2px #f0f0f0;color:#f0f0f0;">Spline</div>
<svg style="left:891.0px;top:203.0px" width="16" height="14"><path d="M0 7 L7.5 1 L15 7 L7.5 13.2 Z" fill="#6a6a6e"/><path d="M5.5 3.2 L7.5 1.6 L9.5 3.2 L7.5 4.800000000000001 Z" fill="#f0f0f0"/><path d="M3.0999999999999996 5.1 L5.1 3.4999999999999996 L7.1 5.1 L5.1 6.699999999999999 Z" fill="#f0f0f0"/><path d="M0.7000000000000002 7.0 L2.7 5.4 L4.7 7.0 L2.7 8.6 Z" fill="#f0f0f0"/><path d="M7.9 5.1 L9.9 3.4999999999999996 L11.9 5.1 L9.9 6.699999999999999 Z" fill="#f0f0f0"/><path d="M5.5 7.0 L7.5 5.4 L9.5 7.0 L7.5 8.6 Z" fill="#f0f0f0"/><path d="M3.0999999999999996 8.9 L5.1 7.300000000000001 L7.1 8.9 L5.1 10.5 Z" fill="#f0f0f0"/><path d="M10.3 7.0 L12.3 5.4 L14.3 7.0 L12.3 8.6 Z" fill="#f0f0f0"/><path d="M7.9 8.9 L9.9 7.300000000000001 L11.9 8.9 L9.9 10.5 Z" fill="#f0f0f0"/><path d="M5.5 10.8 L7.5 9.200000000000001 L9.5 10.8 L7.5 12.4 Z" fill="#f0f0f0"/></svg>
<div class="t" style="left:913.5px;top:204.9px;font-size:11.66px;letter-spacing:-0.12px;-webkit-text-stroke:0.2px #f0f0f0;color:#f0f0f0;">Surface</div>
<svg style="left:870.5px;top:224.4px" width="7" height="7"><path d="M6 0.5 L6 6 L0.5 6 Z" fill="#8a8a8a"/></svg>
<div class="t" style="left:881.5px;top:222.7px;font-size:11.66px;letter-spacing:-0.12px;-webkit-text-stroke:0.2px #f0f0f0;color:#f0f0f0;">Parameters</div>
<svg style="left:891.0px;top:238.7px" width="16" height="16"><rect x="0.5" y="0.5" width="15" height="15" rx="3.5" fill="#d8eefa" stroke="#f4fbff"/><rect x="2" y="2" width="12" height="12" rx="2.5" fill="#b8def4"/><text x="1.6" y="14" font-family="Liberation Sans" font-weight="bold" font-size="12.5" fill="#1e5a8a">X</text><text x="10.5" y="7" font-family="Liberation Sans" font-weight="bold" font-size="7" fill="#102840">2</text></svg>
<div class="t" style="left:913.5px;top:240.5px;font-size:11.66px;letter-spacing:-0.12px;-webkit-text-stroke:0.2px #f0f0f0;color:#f0f0f0;">Numeric</div>
<svg style="left:891.0px;top:256.6px" width="16" height="16"><rect x="0.5" y="0.5" width="15" height="15" rx="3.5" fill="#d8eefa" stroke="#f4fbff"/><rect x="2" y="2" width="12" height="12" rx="2.5" fill="#b8def4"/><text x="8" y="13.3" text-anchor="middle" font-family="Liberation Sans" font-weight="bold" font-size="12.5" fill="#1e5a8a">2</text></svg>
<div class="t" style="left:913.5px;top:258.4px;font-size:11.66px;letter-spacing:-0.12px;-webkit-text-stroke:0.2px #f0f0f0;color:#f0f0f0;">Constant</div>
<svg style="left:891.0px;top:274.4px" width="16" height="16"><rect x="0.5" y="0.5" width="15" height="15" rx="3.5" fill="#d8eefa" stroke="#f4fbff"/><rect x="2" y="2" width="12" height="12" rx="2.5" fill="#b8def4"/><text x="8" y="13.3" text-anchor="middle" font-family="Liberation Sans" font-weight="bold" font-size="12.5" fill="#1e5a8a">R</text></svg>
<div class="t" style="left:913.5px;top:276.2px;font-size:11.66px;letter-spacing:-0.12px;-webkit-text-stroke:0.2px #f0f0f0;color:#f0f0f0;">Random</div>
<svg style="left:870.5px;top:295.7px" width="7" height="7"><path d="M6 0.5 L6 6 L0.5 6 Z" fill="#8a8a8a"/></svg>
<div class="t" style="left:881.5px;top:294.1px;font-size:11.66px;letter-spacing:-0.12px;-webkit-text-stroke:0.2px #f0f0f0;color:#f0f0f0;">Operators</div>
<svg style="left:891.0px;top:310.1px" width="16" height="16"><circle cx="4.3" cy="4.3" r="3.4" fill="#2030b0"/><circle cx="11.3" cy="4.3" r="3.4" fill="#d8e0e0"/><circle cx="4.3" cy="11.3" r="3.4" fill="#20b030"/><circle cx="11.3" cy="11.3" r="3.4" fill="#c01818"/><circle cx="3.5" cy="3.3" r="1.1" fill="#8090ff"/><circle cx="3.5" cy="10.3" r="1.1" fill="#90ff90"/><circle cx="10.5" cy="10.3" r="1.1" fill="#ff8080"/></svg>
<div class="t" style="left:913.5px;top:311.9px;font-size:11.66px;letter-spacing:-0.12px;-webkit-text-stroke:0.2px #f0f0f0;color:#f0f0f0;">Material</div>
<svg style="left:891.0px;top:327.9px" width="16" height="16"><rect x="0.5" y="6" width="6" height="4" fill="#90c8f0"/><rect x="7" y="7.5" width="2" height="1" fill="#90c8f0"/><rect x="9" y="1.5" width="6.5" height="5" fill="#90e060"/><rect x="9" y="9" width="6.5" height="5" fill="#90c8f0"/></svg>
<div class="t" style="left:913.5px;top:329.7px;font-size:11.66px;letter-spacing:-0.12px;-webkit-text-stroke:0.2px #f0f0f0;color:#f0f0f0;">Conditional</div>
<svg style="left:891.0px;top:345.8px" width="16" height="16"><path d="M1.5 6 L6 1.5 L11 2.5 L14.5 6.5 L13.5 11.5 L9 14.5 L4 14 L1 10 Z" fill="#d82222"/><path d="M1.5 6 L6 1.5 L11 2.5 L8 6 Z" fill="#f05050"/><path d="M8 6 L14.5 6.5 L13.5 11.5 L9 14.5 Z" fill="#b01818"/><circle cx="4" cy="5" r="0.8" fill="#ffb0b0"/><circle cx="7" cy="3.5" r="0.8" fill="#ffb0b0"/><circle cx="10" cy="5.5" r="0.8" fill="#ffb0b0"/><circle cx="3.5" cy="9" r="0.8" fill="#ffb0b0"/><circle cx="6.5" cy="8" r="0.8" fill="#ffb0b0"/><circle cx="10" cy="10" r="0.8" fill="#ffb0b0"/><circle cx="6" cy="12" r="0.8" fill="#ffb0b0"/><circle cx="12" cy="8" r="0.8" fill="#ffb0b0"/></svg>
<div class="t" style="left:913.5px;top:347.6px;font-size:11.66px;letter-spacing:-0.12px;-webkit-text-stroke:0.2px #f0f0f0;color:#f0f0f0;">Randomize</div>
<svg style="left:891.0px;top:363.6px" width="16" height="16"><rect x="0.5" y="0.5" width="7" height="10" fill="#2058a0"/><rect x="1.5" y="1.5" width="5" height="8" fill="#c8e8ff"/><text x="4" y="8.5" text-anchor="middle" font-family="Liberation Sans" font-size="7" font-weight="bold" fill="#1a3a80">1</text><rect x="7.5" y="5" width="8" height="10.5" fill="#2058a0"/><rect x="8.5" y="6" width="6" height="8.5" fill="#c8e8ff"/><text x="11.5" y="13.3" text-anchor="middle" font-family="Liberation Sans" font-size="7" font-weight="bold" fill="#1a3a80">2</text></svg>
<div class="t" style="left:913.5px;top:365.4px;font-size:11.66px;letter-spacing:-0.12px;-webkit-text-stroke:0.2px #f0f0f0;color:#f0f0f0;">Sequence</div>
<svg style="left:891.0px;top:381.4px" width="16" height="16"><path d="M0 5.5H6" stroke="#e8c030" stroke-width="1.6"/><path d="M5 3 L8 5.5 L5 8 Z" fill="#e8c030"/><rect x="9" y="0.5" width="6.5" height="3" fill="#70b8f0"/><rect x="9" y="4.3" width="6.5" height="2.6" fill="#80d050"/><rect x="9" y="7.8" width="6.5" height="2.8" fill="#5098e0"/><rect x="9" y="11.5" width="6.5" height="3" fill="#70b8f0"/></svg>
<div class="t" style="left:913.5px;top:383.3px;font-size:11.66px;letter-spacing:-0.12px;-webkit-text-stroke:0.2px #f0f0f0;color:#f0f0f0;">Selector</div>
<svg style="left:891.0px;top:399.3px" width="16" height="17"><path d="M1 2.5H6M10 2.5H15" stroke="#e8c030" stroke-width="1.4"/><path d="M6 0.5 L8 2.5 L6 4.5Z M10 0.5 L8 2.5 L10 4.5Z" fill="#e8c030"/><rect x="1.5" y="6" width="6" height="10" fill="#50a0e8"/><rect x="2.5" y="7" width="2.5" height="5" fill="#b0dcff"/><rect x="8.5" y="9" width="6" height="7" fill="#60b0f0"/><rect x="9.5" y="10" width="3" height="3" fill="#c0e8ff"/></svg>
<div class="t" style="left:913.5px;top:401.1px;font-size:11.66px;letter-spacing:-0.12px;-webkit-text-stroke:0.2px #f0f0f0;color:#f0f0f0;">Compose</div>
<svg style="left:891.0px;top:417.1px" width="16" height="17"><path d="M4 2.5H15" stroke="#e8c030" stroke-width="1.4"/><path d="M5 0.3 L1.5 2.5 L5 4.7Z" fill="#e8c030"/><rect x="1.5" y="8.5" width="6" height="7.5" fill="#60b0f0"/><rect x="8.5" y="6" width="6" height="10" fill="#50a0e8"/><rect x="9.5" y="7" width="3" height="5" fill="#c0e8ff"/></svg>
<div class="t" style="left:913.5px;top:418.9px;font-size:11.66px;letter-spacing:-0.12px;-webkit-text-stroke:0.2px #f0f0f0;color:#f0f0f0;">Reverse</div>
<svg style="left:891.0px;top:435.0px" width="16" height="17"><path d="M3 6 L9 1.5 L13 3 L13 12 L9 16 L3 16 Z" fill="#8aa8c8"/><rect x="2.5" y="7" width="7" height="9" rx="1" fill="#3a90e0"/><rect x="3.5" y="8" width="3" height="3" fill="#b8e0ff"/><path d="M9 3 L12.5 4" stroke="#e0e8f0" stroke-width="1"/></svg>
<div class="t" style="left:913.5px;top:436.8px;font-size:11.66px;letter-spacing:-0.12px;-webkit-text-stroke:0.2px #f0f0f0;color:#f0f0f0;">Transform</div>
<svg style="left:891.0px;top:452.8px" width="16" height="16"><path d="M0.5 1 L6.5 5 L6.5 15.5 L0.5 15.5Z" fill="#3a88d8"/><path d="M15.5 1 L9.5 5 L9.5 15.5 L15.5 15.5Z" fill="#3a88d8"/><path d="M1.5 3 L3.5 4.3 L3.5 12 L1.5 12Z" fill="#a8d8ff"/><path d="M14.5 3 L12.5 4.3 L12.5 12 L14.5 12Z" fill="#a8d8ff"/><rect x="7.4" y="0" width="1.2" height="16" fill="#506070"/></svg>
<div class="t" style="left:913.5px;top:454.6px;font-size:11.66px;letter-spacing:-0.12px;-webkit-text-stroke:0.2px #f0f0f0;color:#f0f0f0;">Mirror</div>
<svg style="left:891.0px;top:470.6px" width="16" height="16"><rect x="0.5" y="0.5" width="15" height="15" rx="3.5" fill="#d8eefa" stroke="#f4fbff"/><rect x="2" y="2" width="12" height="12" rx="2.5" fill="#b0d8f4"/><path d="M11.5 3.5H4.5L8.3 8L4.5 12.5H11.8" fill="none" stroke="#1a4a90" stroke-width="1.8"/></svg>
<div class="t" style="left:913.5px;top:472.5px;font-size:11.66px;letter-spacing:-0.12px;-webkit-text-stroke:0.2px #f0f0f0;color:#f0f0f0;">Arithmetic</div>
<svg style="left:891.0px;top:488.5px" width="14" height="14"><rect x="0.5" y="0.5" width="12" height="12" fill="#a0c0e0" stroke="#6888b0"/></svg>
<div class="t" style="left:913.5px;top:490.3px;font-size:11.66px;letter-spacing:-0.12px;-webkit-text-stroke:0.2px #f0f0f0;color:#f0f0f0;">UVW XForm</div>
<svg style="left:870.5px;top:509.8px" width="7" height="7"><path d="M6 0.5 L6 6 L0.5 6 Z" fill="#8a8a8a"/></svg>
<div class="t" style="left:881.5px;top:508.1px;font-size:11.66px;letter-spacing:-0.12px;-webkit-text-stroke:0.2px #f0f0f0;color:#f0f0f0;">Others</div>
<svg style="left:891.0px;top:524.2px" width="16" height="16"><rect x="2" y="0.5" width="12" height="15" fill="#386878"/><rect x="3.5" y="2" width="9" height="12" fill="#70b0c8"/><path d="M7 3.5 Q5.5 3.5 5.5 5.5 L5.5 7 L4.5 8 L5.5 9 L5.5 10.5 Q5.5 12.5 7 12.5 M9 3.5 Q10.5 3.5 10.5 5.5 L10.5 7 L11.5 8 L10.5 9 L10.5 10.5 Q10.5 12.5 9 12.5" fill="none" stroke="#e8f4ff" stroke-width="1.1"/></svg>
<div class="t" style="left:913.5px;top:526.0px;font-size:11.66px;letter-spacing:-0.12px;-webkit-text-stroke:0.2px #f0f0f0;color:#f0f0f0;">Macro</div>
<svg style="left:891.0px;top:542.0px" width="17" height="17"><rect x="0.5" y="0.5" width="10.5" height="15.5" rx="1.5" fill="#f8f4f4" stroke="#8aa0b0"/><path d="M2.3 3.5h7M2.3 6.3h7M2.3 9.1h7" stroke="#d82848" stroke-width="1.7"/><rect x="1" y="11.5" width="9.5" height="4" fill="#70c0e8"/><rect x="13" y="1.5" width="3" height="14" fill="#e8d030"/></svg>
<div class="t" style="left:913.5px;top:543.8px;font-size:11.66px;letter-spacing:-0.12px;-webkit-text-stroke:0.2px #f0f0f0;color:#f0f0f0;">Note</div>
<svg style="left:0;top:0" width="1067" height="614"><path d="M369.5 198.6 C422.1 198.6 422.1 209.2 474.7 209.2" fill="none" stroke="#222222" stroke-width="2.1"/><path d="M367.4 230 C421.04999999999995 230 421.04999999999995 226.2 474.7 226.2" fill="none" stroke="#222222" stroke-width="2.1"/><path d="M574.5 215.7 C657.35 215.7 657.35 222.5 740.2 222.5" fill="none" stroke="#222222" stroke-width="2.1"/><path d="M574.5 215.7 C657.35 215.7 657.35 256.5 740.2 256.5" fill="none" stroke="#222222" stroke-width="2.1"/><path d="M574.5 215.7 C657.35 215.7 657.35 273.5 740.2 273.5" fill="none" stroke="#222222" stroke-width="2.1"/><path d="M581.9 300 C661.05 300 661.05 154.5 740.2 154.5" fill="none" stroke="#222222" stroke-width="2.1"/><path d="M581.9 300 C661.05 300 661.05 330.2 740.2 330.2" fill="none" stroke="#222222" stroke-width="2.1"/><path d="M592.5 330.7 C666.35 330.7 666.35 188.5 740.2 188.5" fill="none" stroke="#222222" stroke-width="2.1"/><path d="M592.5 330.7 C666.35 330.7 666.35 364.2 740.2 364.2" fill="none" stroke="#222222" stroke-width="2.1"/><path d="M299.7 384.1 C345.2 384.1 345.2 399 390.7 399" fill="none" stroke="#222222" stroke-width="2.1"/><path d="M302 415.4 C346.35 415.4 346.35 416 390.7 416" fill="none" stroke="#222222" stroke-width="2.1"/><path d="M302.3 448.8 C346.5 448.8 346.5 433 390.7 433" fill="none" stroke="#222222" stroke-width="2.1"/><path d="M490.1 414.6 C511.5 414.6 511.5 417.2 532.9 417.2" fill="none" stroke="#e8e8e8" stroke-width="2.1"/><path d="M630.7 407.2 C685.45 407.2 685.45 381.2 740.2 381.2" fill="none" stroke="#e8e8e8" stroke-width="2.1"/></svg>
<div style="position:absolute;left:360.2px;top:193.1px;width:5px;height:11px;background:#cfc8dc;border-top:2px solid #111;border-bottom:2px solid #111;"></div>
<div style="position:absolute;left:293.6px;top:188px;width:67.59999999999997px;height:22px;background:#f0ad6c;border:2px solid #111;border-radius:6px;"></div>
<svg style="left:301.5px;top:191.5px" width="16" height="16"><g transform="scale(1.0)"><path d="M4 2 L7.5 0 L11 2 L7.5 4 Z" fill="#9ad4ff"/><path d="M4 2 L7.5 4 L7.5 9 L4 7 Z" fill="#58aef0"/><path d="M11 2 L7.5 4 L7.5 9 L11 7 Z" fill="#1c5aa8"/><path d="M0.5 8 L4.0 6 L7.5 8 L4.0 10 Z" fill="#9ad4ff"/><path d="M0.5 8 L4.0 10 L4.0 15 L0.5 13 Z" fill="#58aef0"/><path d="M7.5 8 L4.0 10 L4.0 15 L7.5 13 Z" fill="#1c5aa8"/><path d="M7.5 8 L11.0 6 L14.5 8 L11.0 10 Z" fill="#9ad4ff"/><path d="M7.5 8 L11.0 10 L11.0 15 L7.5 13 Z" fill="#58aef0"/><path d="M14.5 8 L11.0 10 L11.0 15 L14.5 13 Z" fill="#1c5aa8"/></g></svg>
<div class="t" style="left:321.5px;top:194.0px;font-size:11.02px;letter-spacing:-0.12px;-webkit-text-stroke:0.2px #111;color:#111;">Post1</div>
<svg style="left:363.5px;top:192.6px" width="12" height="12"><circle cx="6" cy="6" r="4.95" fill="#eef000" stroke="#1a1a1a" stroke-width="1.1"/></svg>
<div style="position:absolute;left:358px;top:224.5px;width:5px;height:11px;background:#cfc8dc;border-top:2px solid #111;border-bottom:2px solid #111;"></div>
<div style="position:absolute;left:291.6px;top:219.3px;width:67.39999999999998px;height:21.19999999999999px;background:#f0ad6c;border:2px solid #111;border-radius:6px;"></div>
<svg style="left:299.8px;top:222.4px" width="16" height="16"><g transform="scale(1.0)"><path d="M4 2 L7.5 0 L11 2 L7.5 4 Z" fill="#9ad4ff"/><path d="M4 2 L7.5 4 L7.5 9 L4 7 Z" fill="#58aef0"/><path d="M11 2 L7.5 4 L7.5 9 L11 7 Z" fill="#1c5aa8"/><path d="M0.5 8 L4.0 6 L7.5 8 L4.0 10 Z" fill="#9ad4ff"/><path d="M0.5 8 L4.0 10 L4.0 15 L0.5 13 Z" fill="#58aef0"/><path d="M7.5 8 L4.0 10 L4.0 15 L7.5 13 Z" fill="#1c5aa8"/><path d="M7.5 8 L11.0 6 L14.5 8 L11.0 10 Z" fill="#9ad4ff"/><path d="M7.5 8 L11.0 10 L11.0 15 L7.5 13 Z" fill="#58aef0"/><path d="M14.5 8 L11.0 10 L11.0 15 L14.5 13 Z" fill="#1c5aa8"/></g></svg>
<div class="t" style="left:319.8px;top:224.9px;font-size:11.02px;letter-spacing:-0.12px;-webkit-text-stroke:0.2px #111;color:#111;">Post2</div>
<svg style="left:361.4px;top:224.0px" width="12" height="12"><circle cx="6" cy="6" r="4.95" fill="#eef000" stroke="#1a1a1a" stroke-width="1.1"/></svg>
<div style="position:absolute;left:573px;top:294.5px;width:5px;height:11px;background:#cfc8dc;border-top:2px solid #111;border-bottom:2px solid #111;"></div>
<div style="position:absolute;left:505.5px;top:289.4px;width:68.5px;height:21.600000000000023px;background:#a8ec72;border:2px solid #111;border-radius:6px;"></div>
<svg style="left:513.8px;top:292.7px" width="16" height="16"><path d="M1.5 13 C2 5 7 7 8.5 9.5 C11 12 13 5 14 2" fill="none" stroke="#3a5a30" stroke-width="1"/><circle cx="1.5" cy="13" r="1.3" fill="none" stroke="#3a5a30"/><path d="M13 1 L14 3 L15 1" stroke="#3a5a30" fill="none" stroke-width="0.8"/></svg>
<div class="t" style="left:533.8px;top:295.2px;font-size:11.02px;letter-spacing:-0.12px;-webkit-text-stroke:0.2px #111;color:#111;">Spline</div>
<svg style="left:575.9px;top:294.0px" width="12" height="12"><circle cx="6" cy="6" r="4.95" fill="#eef000" stroke="#1a1a1a" stroke-width="1.1"/></svg>
<div style="position:absolute;left:583px;top:325.2px;width:5px;height:11px;background:#cfc8dc;border-top:2px solid #111;border-bottom:2px solid #111;"></div>
<div style="position:absolute;left:507px;top:319.9px;width:77px;height:21.700000000000045px;background:#a8ec72;border:2px solid #111;border-radius:6px;"></div>
<svg style="left:514.3px;top:323.2px" width="16" height="14"><path d="M0 7 L7.5 1 L15 7 L7.5 13.2 Z" fill="#6a6a6e"/><path d="M5.5 3.2 L7.5 1.6 L9.5 3.2 L7.5 4.800000000000001 Z" fill="#f0f0f0"/><path d="M3.0999999999999996 5.1 L5.1 3.4999999999999996 L7.1 5.1 L5.1 6.699999999999999 Z" fill="#f0f0f0"/><path d="M0.7000000000000002 7.0 L2.7 5.4 L4.7 7.0 L2.7 8.6 Z" fill="#f0f0f0"/><path d="M7.9 5.1 L9.9 3.4999999999999996 L11.9 5.1 L9.9 6.699999999999999 Z" fill="#f0f0f0"/><path d="M5.5 7.0 L7.5 5.4 L9.5 7.0 L7.5 8.6 Z" fill="#f0f0f0"/><path d="M3.0999999999999996 8.9 L5.1 7.300000000000001 L7.1 8.9 L5.1 10.5 Z" fill="#f0f0f0"/><path d="M10.3 7.0 L12.3 5.4 L14.3 7.0 L12.3 8.6 Z" fill="#f0f0f0"/><path d="M7.9 8.9 L9.9 7.300000000000001 L11.9 8.9 L9.9 10.5 Z" fill="#f0f0f0"/><path d="M5.5 10.8 L7.5 9.200000000000001 L9.5 10.8 L7.5 12.4 Z" fill="#f0f0f0"/></svg>
<div class="t" style="left:534.3px;top:325.7px;font-size:11.02px;letter-spacing:-0.12px;-webkit-text-stroke:0.2px #111;color:#111;">Surface</div>
<svg style="left:586.5px;top:324.7px" width="12" height="12"><circle cx="6" cy="6" r="4.95" fill="#eef000" stroke="#1a1a1a" stroke-width="1.1"/></svg>
<div style="position:absolute;left:291.5px;top:378.6px;width:5px;height:11px;background:#cfc8dc;border-top:2px solid #111;border-bottom:2px solid #111;"></div>
<div style="position:absolute;left:217.2px;top:373.9px;width:75.30000000000001px;height:21.100000000000023px;background:#f0ad6c;border:2px solid #111;border-radius:6px;"></div>
<svg style="left:225.0px;top:376.9px" width="16" height="16"><g transform="scale(1.0)"><path d="M4 2 L7.5 0 L11 2 L7.5 4 Z" fill="#9ad4ff"/><path d="M4 2 L7.5 4 L7.5 9 L4 7 Z" fill="#58aef0"/><path d="M11 2 L7.5 4 L7.5 9 L11 7 Z" fill="#1c5aa8"/><path d="M0.5 8 L4.0 6 L7.5 8 L4.0 10 Z" fill="#9ad4ff"/><path d="M0.5 8 L4.0 10 L4.0 15 L0.5 13 Z" fill="#58aef0"/><path d="M7.5 8 L4.0 10 L4.0 15 L7.5 13 Z" fill="#1c5aa8"/><path d="M7.5 8 L11.0 6 L14.5 8 L11.0 10 Z" fill="#9ad4ff"/><path d="M7.5 8 L11.0 10 L11.0 15 L7.5 13 Z" fill="#58aef0"/><path d="M14.5 8 L11.0 10 L11.0 15 L14.5 13 Z" fill="#1c5aa8"/></g></svg>
<div class="t" style="left:245.0px;top:379.4px;font-size:11.02px;letter-spacing:-0.12px;-webkit-text-stroke:0.2px #111;color:#111;">Board1</div>
<svg style="left:293.7px;top:378.1px" width="12" height="12"><circle cx="6" cy="6" r="4.95" fill="#eef000" stroke="#1a1a1a" stroke-width="1.1"/></svg>
<div style="position:absolute;left:293px;top:409.9px;width:5px;height:11px;background:#cfc8dc;border-top:2px solid #111;border-bottom:2px solid #111;"></div>
<div style="position:absolute;left:219.4px;top:405.2px;width:74.6px;height:20.5px;background:#f0ad6c;border:2px solid #111;border-radius:6px;"></div>
<svg style="left:227.0px;top:407.9px" width="16" height="16"><g transform="scale(1.0)"><path d="M4 2 L7.5 0 L11 2 L7.5 4 Z" fill="#9ad4ff"/><path d="M4 2 L7.5 4 L7.5 9 L4 7 Z" fill="#58aef0"/><path d="M11 2 L7.5 4 L7.5 9 L11 7 Z" fill="#1c5aa8"/><path d="M0.5 8 L4.0 6 L7.5 8 L4.0 10 Z" fill="#9ad4ff"/><path d="M0.5 8 L4.0 10 L4.0 15 L0.5 13 Z" fill="#58aef0"/><path d="M7.5 8 L4.0 10 L4.0 15 L7.5 13 Z" fill="#1c5aa8"/><path d="M7.5 8 L11.0 6 L14.5 8 L11.0 10 Z" fill="#9ad4ff"/><path d="M7.5 8 L11.0 10 L11.0 15 L7.5 13 Z" fill="#58aef0"/><path d="M14.5 8 L11.0 10 L11.0 15 L14.5 13 Z" fill="#1c5aa8"/></g></svg>
<div class="t" style="left:247.0px;top:410.4px;font-size:11.02px;letter-spacing:-0.12px;-webkit-text-stroke:0.2px #111;color:#111;">Board2</div>
<svg style="left:296.0px;top:409.4px" width="12" height="12"><circle cx="6" cy="6" r="4.95" fill="#eef000" stroke="#1a1a1a" stroke-width="1.1"/></svg>
<div style="position:absolute;left:294px;top:443.3px;width:5px;height:11px;background:#cfc8dc;border-top:2px solid #111;border-bottom:2px solid #111;"></div>
<div style="position:absolute;left:220.3px;top:438.5px;width:74.69999999999999px;height:20.5px;background:#f0ad6c;border:2px solid #111;border-radius:6px;"></div>
<svg style="left:227.8px;top:441.2px" width="16" height="16"><g transform="scale(1.0)"><path d="M4 2 L7.5 0 L11 2 L7.5 4 Z" fill="#9ad4ff"/><path d="M4 2 L7.5 4 L7.5 9 L4 7 Z" fill="#58aef0"/><path d="M11 2 L7.5 4 L7.5 9 L11 7 Z" fill="#1c5aa8"/><path d="M0.5 8 L4.0 6 L7.5 8 L4.0 10 Z" fill="#9ad4ff"/><path d="M0.5 8 L4.0 10 L4.0 15 L0.5 13 Z" fill="#58aef0"/><path d="M7.5 8 L4.0 10 L4.0 15 L7.5 13 Z" fill="#1c5aa8"/><path d="M7.5 8 L11.0 6 L14.5 8 L11.0 10 Z" fill="#9ad4ff"/><path d="M7.5 8 L11.0 10 L11.0 15 L7.5 13 Z" fill="#58aef0"/><path d="M14.5 8 L11.0 10 L11.0 15 L14.5 13 Z" fill="#1c5aa8"/></g></svg>
<div class="t" style="left:247.8px;top:443.7px;font-size:11.02px;letter-spacing:-0.12px;-webkit-text-stroke:0.2px #111;color:#111;">Board3</div>
<svg style="left:296.3px;top:442.8px" width="12" height="12"><circle cx="6" cy="6" r="4.95" fill="#eef000" stroke="#1a1a1a" stroke-width="1.1"/></svg>
<div style="position:absolute;left:562px;top:196px;width:14px;height:40px;background:#c4c4ce;border:2px solid #111;border-radius:0 6px 6px 0;"></div>
<div style="position:absolute;left:473.6px;top:177px;width:94.39999999999998px;height:79px;background:#b4b5c1;border:2px solid #111;border-radius:6px;overflow:hidden;"></div>
<div style="position:absolute;left:475.6px;top:179px;width:90.39999999999998px;height:18.30000000000001px;background:#ef6666;border-radius:4px 4px 0 0;"></div>
<div style="position:absolute;left:475.6px;top:197.3px;width:90.39999999999998px;height:2px;background:#111;"></div>
<svg style="left:484.5px;top:180.7px" width="16" height="16"><path d="M1.5 6 L6 1.5 L11 2.5 L14.5 6.5 L13.5 11.5 L9 14.5 L4 14 L1 10 Z" fill="#d82222"/><path d="M1.5 6 L6 1.5 L11 2.5 L8 6 Z" fill="#f05050"/><path d="M8 6 L14.5 6.5 L13.5 11.5 L9 14.5 Z" fill="#b01818"/><circle cx="4" cy="5" r="0.8" fill="#ffb0b0"/><circle cx="7" cy="3.5" r="0.8" fill="#ffb0b0"/><circle cx="10" cy="5.5" r="0.8" fill="#ffb0b0"/><circle cx="3.5" cy="9" r="0.8" fill="#ffb0b0"/><circle cx="6.5" cy="8" r="0.8" fill="#ffb0b0"/><circle cx="10" cy="10" r="0.8" fill="#ffb0b0"/><circle cx="6" cy="12" r="0.8" fill="#ffb0b0"/><circle cx="12" cy="8" r="0.8" fill="#ffb0b0"/></svg>
<div class="t" style="left:501.5px;top:182.8px;font-size:11.02px;letter-spacing:-0.12px;-webkit-text-stroke:0.2px #2a0808;color:#2a0808;">Randomize</div>
<div class="t" style="left:483.6px;top:205.0px;font-size:10.92px;letter-spacing:-0.12px;-webkit-text-stroke:0.2px #111;color:#111;">Post1</div>
<div class="t" style="left:483.6px;top:222.0px;font-size:10.92px;letter-spacing:-0.12px;-webkit-text-stroke:0.2px #111;color:#111;">Post2</div>
<div class="t" style="left:483.6px;top:239.2px;font-size:10.92px;letter-spacing:-0.12px;-webkit-text-stroke:0.2px #111;color:#111;">&lt;empty&gt;</div>
<svg style="left:468.8px;top:203.2px" width="12" height="12"><circle cx="6" cy="6" r="4.95" fill="#eef000" stroke="#1a1a1a" stroke-width="1.1"/></svg>
<svg style="left:468.8px;top:220.2px" width="12" height="12"><circle cx="6" cy="6" r="4.95" fill="#eef000" stroke="#1a1a1a" stroke-width="1.1"/></svg>
<svg style="left:468.8px;top:237.4px" width="12" height="12"><circle cx="6" cy="6" r="4.95" fill="#10d418" stroke="#1a1a1a" stroke-width="1.1"/></svg>
<svg style="left:568.5px;top:209.7px" width="12" height="12"><circle cx="6" cy="6" r="4.95" fill="#eef000" stroke="#1a1a1a" stroke-width="1.1"/></svg>
<div style="position:absolute;left:478px;top:390px;width:13.5px;height:48px;background:#c4c4ce;border:2px solid #111;border-radius:0 6px 6px 0;"></div>
<div style="position:absolute;left:389.8px;top:368px;width:94.19999999999999px;height:95px;background:#b4b5c1;border:2px solid #111;border-radius:6px;overflow:hidden;"></div>
<div style="position:absolute;left:391.8px;top:370px;width:90.19999999999999px;height:17.600000000000023px;background:#ef6666;border-radius:4px 4px 0 0;"></div>
<div style="position:absolute;left:391.8px;top:387.6px;width:90.19999999999999px;height:2px;background:#111;"></div>
<svg style="left:400.5px;top:371.3px" width="16" height="16"><path d="M1.5 6 L6 1.5 L11 2.5 L14.5 6.5 L13.5 11.5 L9 14.5 L4 14 L1 10 Z" fill="#d82222"/><path d="M1.5 6 L6 1.5 L11 2.5 L8 6 Z" fill="#f05050"/><path d="M8 6 L14.5 6.5 L13.5 11.5 L9 14.5 Z" fill="#b01818"/><circle cx="4" cy="5" r="0.8" fill="#ffb0b0"/><circle cx="7" cy="3.5" r="0.8" fill="#ffb0b0"/><circle cx="10" cy="5.5" r="0.8" fill="#ffb0b0"/><circle cx="3.5" cy="9" r="0.8" fill="#ffb0b0"/><circle cx="6.5" cy="8" r="0.8" fill="#ffb0b0"/><circle cx="10" cy="10" r="0.8" fill="#ffb0b0"/><circle cx="6" cy="12" r="0.8" fill="#ffb0b0"/><circle cx="12" cy="8" r="0.8" fill="#ffb0b0"/></svg>
<div class="t" style="left:417.5px;top:373.5px;font-size:11.02px;letter-spacing:-0.12px;-webkit-text-stroke:0.2px #2a0808;color:#2a0808;">Randomize</div>
<div class="t" style="left:399.8px;top:394.8px;font-size:10.92px;letter-spacing:-0.12px;-webkit-text-stroke:0.2px #111;color:#111;">Board1</div>
<div class="t" style="left:399.8px;top:411.8px;font-size:10.92px;letter-spacing:-0.12px;-webkit-text-stroke:0.2px #111;color:#111;">Board2</div>
<div class="t" style="left:399.8px;top:428.8px;font-size:10.92px;letter-spacing:-0.12px;-webkit-text-stroke:0.2px #111;color:#111;">Board3</div>
<div class="t" style="left:399.8px;top:446.2px;font-size:10.92px;letter-spacing:-0.12px;-webkit-text-stroke:0.2px #111;color:#111;">&lt;empty&gt;</div>
<svg style="left:385.0px;top:393.0px" width="12" height="12"><circle cx="6" cy="6" r="4.95" fill="#eef000" stroke="#1a1a1a" stroke-width="1.1"/></svg>
<svg style="left:385.0px;top:410.0px" width="12" height="12"><circle cx="6" cy="6" r="4.95" fill="#eef000" stroke="#1a1a1a" stroke-width="1.1"/></svg>
<svg style="left:385.0px;top:427.0px" width="12" height="12"><circle cx="6" cy="6" r="4.95" fill="#eef000" stroke="#1a1a1a" stroke-width="1.1"/></svg>
<svg style="left:385.0px;top:444.4px" width="12" height="12"><circle cx="6" cy="6" r="4.95" fill="#10d418" stroke="#1a1a1a" stroke-width="1.1"/></svg>
<svg style="left:484.1px;top:408.6px" width="12" height="12"><circle cx="6" cy="6" r="4.95" fill="#eef000" stroke="#1a1a1a" stroke-width="1.1"/></svg>
<div style="position:absolute;left:738.8px;top:122px;width:102.20000000000005px;height:163.8px;background:#b4b5c1;border:2px solid #111;border-radius:6px;overflow:hidden;"></div>
<div style="position:absolute;left:740.8px;top:124px;width:98.20000000000005px;height:19.19999999999999px;background:#6ca2ea;border-radius:4px 4px 0 0;"></div>
<div style="position:absolute;left:740.8px;top:143.2px;width:98.20000000000005px;height:2px;background:#111;"></div>
<svg style="left:749.2px;top:126.1px" width="17" height="16"><circle cx="7.5" cy="7" r="5.3" fill="#4aa8e8" stroke="#8a2040" stroke-width="3.6"/><path d="M11 11 L14 14" stroke="#8a2040" stroke-width="2.5"/><rect x="11.60" y="5.80" width="2.4" height="2.4" fill="#fff"/><rect x="10.89" y="8.45" width="2.4" height="2.4" fill="#fff"/><rect x="8.95" y="10.39" width="2.4" height="2.4" fill="#fff"/><rect x="6.30" y="11.10" width="2.4" height="2.4" fill="#fff"/><rect x="3.65" y="10.39" width="2.4" height="2.4" fill="#fff"/><rect x="1.71" y="8.45" width="2.4" height="2.4" fill="#fff"/><rect x="1.00" y="5.80" width="2.4" height="2.4" fill="#fff"/><rect x="1.71" y="3.15" width="2.4" height="2.4" fill="#fff"/><rect x="3.65" y="1.21" width="2.4" height="2.4" fill="#fff"/><rect x="6.30" y="0.50" width="2.4" height="2.4" fill="#fff"/><rect x="8.95" y="1.21" width="2.4" height="2.4" fill="#fff"/><rect x="10.89" y="3.15" width="2.4" height="2.4" fill="#fff"/><rect x="12.5" y="12.5" width="2.4" height="2.4" fill="#fff"/></svg>
<div class="t" style="left:767.2px;top:128.3px;font-size:11.02px;letter-spacing:-0.12px;-webkit-text-stroke:0.2px #0a1838;color:#0a1838;">Posts</div>
<svg style="left:747.8px;top:146.5px" width="16" height="16"><path d="M2 14 C1 6 6 6 8.5 9 C11 12 13 8 13.5 2" fill="none" stroke="#7a7e8e" stroke-width="1.1"/><circle cx="2" cy="13" r="1.2" fill="none" stroke="#8a7aa0" stroke-width="0.9"/><path d="M12.5 1 L13.5 3 L15 0.5" stroke="#7a7e8e" fill="none" stroke-width="0.8"/></svg>
<div class="t" style="left:767.8px;top:150.3px;font-size:10.92px;letter-spacing:-0.12px;-webkit-text-stroke:0.2px #111;color:#111;">Spline</div>
<svg style="left:747.8px;top:163.5px" width="16" height="16"><path d="M2 14 C1 6 6 6 8.5 9 C11 12 13 8 13.5 2" fill="none" stroke="#7a7e8e" stroke-width="1.1"/><circle cx="2" cy="13" r="1.2" fill="none" stroke="#8a7aa0" stroke-width="0.9"/><path d="M12.5 1 L13.5 3 L15 0.5" stroke="#7a7e8e" fill="none" stroke-width="0.8"/></svg>
<div class="t" style="left:767.8px;top:167.3px;font-size:10.92px;letter-spacing:-0.12px;-webkit-text-stroke:0.2px #111;color:#111;">Clipping area</div>
<svg style="left:747.8px;top:181.5px" width="16" height="14"><path d="M0 6.5 L7.5 0.5 L15 6.5 L7.5 13 Z" fill="#5e5e64"/><path d="M5.5 2.7 L7.5 1.1 L9.5 2.7 L7.5 4.300000000000001 Z" fill="#f4f4f4"/><path d="M3.0999999999999996 4.6 L5.1 2.9999999999999996 L7.1 4.6 L5.1 6.199999999999999 Z" fill="#f4f4f4"/><path d="M0.7000000000000002 6.5 L2.7 4.9 L4.7 6.5 L2.7 8.1 Z" fill="#f4f4f4"/><path d="M7.9 4.6 L9.9 2.9999999999999996 L11.9 4.6 L9.9 6.199999999999999 Z" fill="#f4f4f4"/><path d="M5.5 6.5 L7.5 4.9 L9.5 6.5 L7.5 8.1 Z" fill="#f4f4f4"/><path d="M3.0999999999999996 8.4 L5.1 6.800000000000001 L7.1 8.4 L5.1 10.0 Z" fill="#f4f4f4"/><path d="M10.3 6.5 L12.3 4.9 L14.3 6.5 L12.3 8.1 Z" fill="#f4f4f4"/><path d="M7.9 8.4 L9.9 6.800000000000001 L11.9 8.4 L9.9 10.0 Z" fill="#f4f4f4"/><path d="M5.5 10.3 L7.5 8.700000000000001 L9.5 10.3 L7.5 11.9 Z" fill="#f4f4f4"/></svg>
<div class="t" style="left:767.8px;top:184.3px;font-size:10.92px;letter-spacing:-0.12px;-webkit-text-stroke:0.2px #111;color:#111;">Surface</div>
<svg style="left:747.8px;top:197.5px" width="16" height="16"><path d="M1.5 1.8 L13.5 1.5 L13.5 9 L8 10 L8 6 M1.5 1.8 L6.5 15" fill="none" stroke="#3a6a8a" stroke-width="2.4"/></svg>
<div class="t" style="left:767.8px;top:201.3px;font-size:10.92px;letter-spacing:-0.12px;-webkit-text-stroke:0.2px #111;color:#111;">Default</div>
<svg style="left:747.8px;top:214.5px" width="16" height="16"><path d="M1.5 2 L13 1.5 L13 9 L7.5 10 M1.5 2 L6 15" fill="none" stroke="#6a7080" stroke-width="0.9"/><rect x="4.5" y="9" width="2.5" height="3" fill="#3a5a78"/><circle cx="7.5" cy="10" r="1" fill="#3a5a78"/></svg>
<div class="t" style="left:767.8px;top:218.3px;font-size:10.92px;letter-spacing:-0.12px;-webkit-text-stroke:0.2px #111;color:#111;">Start</div>
<svg style="left:747.8px;top:231.5px" width="16" height="16"><path d="M1.5 2 L13 1.5 L13 9 L7.5 10 M1.5 2 L6 15" fill="none" stroke="#6a7080" stroke-width="0.9"/><circle cx="2" cy="2.5" r="1.7" fill="#4a6a88"/><circle cx="12.5" cy="2" r="1.7" fill="#4a6a88"/><rect x="11.5" y="8" width="3" height="3" fill="#3a5a78"/><circle cx="7.5" cy="10" r="1" fill="#3a5a78"/></svg>
<div class="t" style="left:767.8px;top:235.3px;font-size:10.92px;letter-spacing:-0.12px;-webkit-text-stroke:0.2px #111;color:#111;">Corner</div>
<svg style="left:747.8px;top:248.5px" width="16" height="16"><path d="M1.5 2 L13 1.5 L13 9 L7.5 10 M1.5 2 L6 15" fill="none" stroke="#8aa0b8" stroke-width="0.9"/><rect x="0.5" y="1" width="2.6" height="2.6" fill="#3a6080"/><rect x="5.5" y="0.5" width="2.6" height="2.6" fill="#3a6080"/><rect x="11.5" y="1" width="2.6" height="2.6" fill="#3a6080"/><rect x="11.8" y="6" width="2.6" height="2.6" fill="#3a6080"/><rect x="7" y="8.8" width="2.6" height="2.6" fill="#3a6080"/><rect x="2" y="6" width="2.6" height="2.6" fill="#3a6080"/><rect x="4.5" y="11" width="2.6" height="2.6" fill="#3a6080"/></svg>
<div class="t" style="left:767.8px;top:252.3px;font-size:10.92px;letter-spacing:-0.12px;-webkit-text-stroke:0.2px #111;color:#111;">Evenly</div>
<svg style="left:747.8px;top:265.5px" width="16" height="16"><path d="M1.5 2 L13 1.5 L13 9 L7.5 10 M1.5 2 L6 15" fill="none" stroke="#6a7080" stroke-width="0.9"/><rect x="6.5" y="8.5" width="2.5" height="3" fill="#3a5a78"/></svg>
<div class="t" style="left:767.8px;top:269.3px;font-size:10.92px;letter-spacing:-0.12px;-webkit-text-stroke:0.2px #111;color:#111;">End</div>
<svg style="left:734.0px;top:148.5px" width="12" height="12"><circle cx="6" cy="6" r="4.95" fill="#eef000" stroke="#1a1a1a" stroke-width="1.1"/></svg>
<svg style="left:734.0px;top:165.5px" width="12" height="12"><circle cx="6" cy="6" r="4.95" fill="#10d418" stroke="#1a1a1a" stroke-width="1.1"/></svg>
<svg style="left:734.0px;top:182.5px" width="12" height="12"><circle cx="6" cy="6" r="4.95" fill="#eef000" stroke="#1a1a1a" stroke-width="1.1"/></svg>
<svg style="left:734.0px;top:199.5px" width="12" height="12"><circle cx="6" cy="6" r="4.95" fill="#10d418" stroke="#1a1a1a" stroke-width="1.1"/></svg>
<svg style="left:734.0px;top:216.5px" width="12" height="12"><circle cx="6" cy="6" r="4.95" fill="#eef000" stroke="#1a1a1a" stroke-width="1.1"/></svg>
<svg style="left:734.0px;top:233.5px" width="12" height="12"><circle cx="6" cy="6" r="4.95" fill="#10d418" stroke="#1a1a1a" stroke-width="1.1"/></svg>
<svg style="left:734.0px;top:250.5px" width="12" height="12"><circle cx="6" cy="6" r="4.95" fill="#eef000" stroke="#1a1a1a" stroke-width="1.1"/></svg>
<svg style="left:734.0px;top:267.5px" width="12" height="12"><circle cx="6" cy="6" r="4.95" fill="#eef000" stroke="#1a1a1a" stroke-width="1.1"/></svg>
<div style="position:absolute;left:738.8px;top:298.7px;width:102.20000000000005px;height:163.3px;background:#b4b5c1;border:2px solid #111;border-radius:6px;overflow:hidden;"></div>
<div style="position:absolute;left:740.8px;top:300.7px;width:98.20000000000005px;height:18.100000000000023px;background:#6ca2ea;border-radius:4px 4px 0 0;"></div>
<div style="position:absolute;left:740.8px;top:318.8px;width:98.20000000000005px;height:2px;background:#111;"></div>
<svg style="left:748.8px;top:302.2px" width="17" height="16"><circle cx="7.5" cy="7" r="5.3" fill="#4aa8e8" stroke="#8a2040" stroke-width="3.6"/><path d="M11 11 L14 14" stroke="#8a2040" stroke-width="2.5"/><rect x="11.60" y="5.80" width="2.4" height="2.4" fill="#fff"/><rect x="10.89" y="8.45" width="2.4" height="2.4" fill="#fff"/><rect x="8.95" y="10.39" width="2.4" height="2.4" fill="#fff"/><rect x="6.30" y="11.10" width="2.4" height="2.4" fill="#fff"/><rect x="3.65" y="10.39" width="2.4" height="2.4" fill="#fff"/><rect x="1.71" y="8.45" width="2.4" height="2.4" fill="#fff"/><rect x="1.00" y="5.80" width="2.4" height="2.4" fill="#fff"/><rect x="1.71" y="3.15" width="2.4" height="2.4" fill="#fff"/><rect x="3.65" y="1.21" width="2.4" height="2.4" fill="#fff"/><rect x="6.30" y="0.50" width="2.4" height="2.4" fill="#fff"/><rect x="8.95" y="1.21" width="2.4" height="2.4" fill="#fff"/><rect x="10.89" y="3.15" width="2.4" height="2.4" fill="#fff"/><rect x="12.5" y="12.5" width="2.4" height="2.4" fill="#fff"/></svg>
<div class="t" style="left:766.8px;top:304.4px;font-size:11.02px;letter-spacing:-0.12px;-webkit-text-stroke:0.2px #0a1838;color:#0a1838;">Boards</div>
<svg style="left:747.8px;top:322.2px" width="16" height="16"><path d="M2 14 C1 6 6 6 8.5 9 C11 12 13 8 13.5 2" fill="none" stroke="#7a7e8e" stroke-width="1.1"/><circle cx="2" cy="13" r="1.2" fill="none" stroke="#8a7aa0" stroke-width="0.9"/><path d="M12.5 1 L13.5 3 L15 0.5" stroke="#7a7e8e" fill="none" stroke-width="0.8"/></svg>
<div class="t" style="left:767.8px;top:326.0px;font-size:10.92px;letter-spacing:-0.12px;-webkit-text-stroke:0.2px #111;color:#111;">Spline</div>
<svg style="left:747.8px;top:339.2px" width="16" height="16"><path d="M2 14 C1 6 6 6 8.5 9 C11 12 13 8 13.5 2" fill="none" stroke="#7a7e8e" stroke-width="1.1"/><circle cx="2" cy="13" r="1.2" fill="none" stroke="#8a7aa0" stroke-width="0.9"/><path d="M12.5 1 L13.5 3 L15 0.5" stroke="#7a7e8e" fill="none" stroke-width="0.8"/></svg>
<div class="t" style="left:767.8px;top:343.0px;font-size:10.92px;letter-spacing:-0.12px;-webkit-text-stroke:0.2px #111;color:#111;">Clipping area</div>
<svg style="left:747.8px;top:357.2px" width="16" height="14"><path d="M0 6.5 L7.5 0.5 L15 6.5 L7.5 13 Z" fill="#5e5e64"/><path d="M5.5 2.7 L7.5 1.1 L9.5 2.7 L7.5 4.300000000000001 Z" fill="#f4f4f4"/><path d="M3.0999999999999996 4.6 L5.1 2.9999999999999996 L7.1 4.6 L5.1 6.199999999999999 Z" fill="#f4f4f4"/><path d="M0.7000000000000002 6.5 L2.7 4.9 L4.7 6.5 L2.7 8.1 Z" fill="#f4f4f4"/><path d="M7.9 4.6 L9.9 2.9999999999999996 L11.9 4.6 L9.9 6.199999999999999 Z" fill="#f4f4f4"/><path d="M5.5 6.5 L7.5 4.9 L9.5 6.5 L7.5 8.1 Z" fill="#f4f4f4"/><path d="M3.0999999999999996 8.4 L5.1 6.800000000000001 L7.1 8.4 L5.1 10.0 Z" fill="#f4f4f4"/><path d="M10.3 6.5 L12.3 4.9 L14.3 6.5 L12.3 8.1 Z" fill="#f4f4f4"/><path d="M7.9 8.4 L9.9 6.800000000000001 L11.9 8.4 L9.9 10.0 Z" fill="#f4f4f4"/><path d="M5.5 10.3 L7.5 8.700000000000001 L9.5 10.3 L7.5 11.9 Z" fill="#f4f4f4"/></svg>
<div class="t" style="left:767.8px;top:360.0px;font-size:10.92px;letter-spacing:-0.12px;-webkit-text-stroke:0.2px #111;color:#111;">Surface</div>
<svg style="left:747.8px;top:373.2px" width="16" height="16"><path d="M1.5 1.8 L13.5 1.5 L13.5 9 L8 10 L8 6 M1.5 1.8 L6.5 15" fill="none" stroke="#3a6a8a" stroke-width="2.4"/></svg>
<div class="t" style="left:767.8px;top:377.0px;font-size:10.92px;letter-spacing:-0.12px;-webkit-text-stroke:0.2px #111;color:#111;">Default</div>
<svg style="left:747.8px;top:390.2px" width="16" height="16"><path d="M1.5 2 L13 1.5 L13 9 L7.5 10 M1.5 2 L6 15" fill="none" stroke="#6a7080" stroke-width="0.9"/><rect x="4.5" y="9" width="2.5" height="3" fill="#3a5a78"/><circle cx="7.5" cy="10" r="1" fill="#3a5a78"/></svg>
<div class="t" style="left:767.8px;top:394.0px;font-size:10.92px;letter-spacing:-0.12px;-webkit-text-stroke:0.2px #111;color:#111;">Start</div>
<svg style="left:747.8px;top:407.2px" width="16" height="16"><path d="M1.5 2 L13 1.5 L13 9 L7.5 10 M1.5 2 L6 15" fill="none" stroke="#6a7080" stroke-width="0.9"/><circle cx="2" cy="2.5" r="1.7" fill="#4a6a88"/><circle cx="12.5" cy="2" r="1.7" fill="#4a6a88"/><rect x="11.5" y="8" width="3" height="3" fill="#3a5a78"/><circle cx="7.5" cy="10" r="1" fill="#3a5a78"/></svg>
<div class="t" style="left:767.8px;top:411.0px;font-size:10.92px;letter-spacing:-0.12px;-webkit-text-stroke:0.2px #111;color:#111;">Corner</div>
<svg style="left:747.8px;top:424.2px" width="16" height="16"><path d="M1.5 2 L13 1.5 L13 9 L7.5 10 M1.5 2 L6 15" fill="none" stroke="#8aa0b8" stroke-width="0.9"/><rect x="0.5" y="1" width="2.6" height="2.6" fill="#3a6080"/><rect x="5.5" y="0.5" width="2.6" height="2.6" fill="#3a6080"/><rect x="11.5" y="1" width="2.6" height="2.6" fill="#3a6080"/><rect x="11.8" y="6" width="2.6" height="2.6" fill="#3a6080"/><rect x="7" y="8.8" width="2.6" height="2.6" fill="#3a6080"/><rect x="2" y="6" width="2.6" height="2.6" fill="#3a6080"/><rect x="4.5" y="11" width="2.6" height="2.6" fill="#3a6080"/></svg>
<div class="t" style="left:767.8px;top:428.0px;font-size:10.92px;letter-spacing:-0.12px;-webkit-text-stroke:0.2px #111;color:#111;">Evenly</div>
<svg style="left:747.8px;top:441.2px" width="16" height="16"><path d="M1.5 2 L13 1.5 L13 9 L7.5 10 M1.5 2 L6 15" fill="none" stroke="#6a7080" stroke-width="0.9"/><rect x="6.5" y="8.5" width="2.5" height="3" fill="#3a5a78"/></svg>
<div class="t" style="left:767.8px;top:445.0px;font-size:10.92px;letter-spacing:-0.12px;-webkit-text-stroke:0.2px #111;color:#111;">End</div>
<svg style="left:734.0px;top:324.2px" width="12" height="12"><circle cx="6" cy="6" r="4.95" fill="#eef000" stroke="#1a1a1a" stroke-width="1.1"/></svg>
<svg style="left:734.0px;top:341.2px" width="12" height="12"><circle cx="6" cy="6" r="4.95" fill="#10d418" stroke="#1a1a1a" stroke-width="1.1"/></svg>
<svg style="left:734.0px;top:358.2px" width="12" height="12"><circle cx="6" cy="6" r="4.95" fill="#eef000" stroke="#1a1a1a" stroke-width="1.1"/></svg>
<svg style="left:734.0px;top:375.2px" width="12" height="12"><circle cx="6" cy="6" r="4.95" fill="#eef000" stroke="#1a1a1a" stroke-width="1.1"/></svg>
<svg style="left:734.0px;top:392.2px" width="12" height="12"><circle cx="6" cy="6" r="4.95" fill="#10d418" stroke="#1a1a1a" stroke-width="1.1"/></svg>
<svg style="left:734.0px;top:409.2px" width="12" height="12"><circle cx="6" cy="6" r="4.95" fill="#10d418" stroke="#1a1a1a" stroke-width="1.1"/></svg>
<svg style="left:734.0px;top:426.2px" width="12" height="12"><circle cx="6" cy="6" r="4.95" fill="#10d418" stroke="#1a1a1a" stroke-width="1.1"/></svg>
<svg style="left:734.0px;top:443.2px" width="12" height="12"><circle cx="6" cy="6" r="4.95" fill="#10d418" stroke="#1a1a1a" stroke-width="1.1"/></svg>
<div style="position:absolute;left:620px;top:396px;width:11.5px;height:24px;background:#b8b8c4;border:2px solid #e4e4e4;border-radius:0 7px 7px 0;"></div>
<div style="position:absolute;left:532.3px;top:384.6px;width:91.7px;height:46.2px;background:#b4b5c1;border:2px solid #e4e4e4;border-radius:6px;"></div>
<div style="position:absolute;left:534.3px;top:386.6px;width:87.7px;height:19px;background:#ee6868;border-radius:4px 4px 0 0;"></div>
<div style="position:absolute;left:534.3px;top:405.6px;width:87.7px;height:1.5px;background:#e4e4e4;"></div>
<svg style="left:542.5px;top:390.0px" width="16" height="17"><path d="M3 6 L9 1.5 L13 3 L13 12 L9 16 L3 16 Z" fill="#8aa8c8"/><rect x="2.5" y="7" width="7" height="9" rx="1" fill="#3a90e0"/><rect x="3.5" y="8" width="3" height="3" fill="#b8e0ff"/><path d="M9 3 L12.5 4" stroke="#e0e8f0" stroke-width="1"/></svg>
<div class="t" style="left:560.4px;top:390.5px;font-size:11.02px;letter-spacing:-0.12px;-webkit-text-stroke:0.2px #111;color:#111;">Transform</div>
<svg style="left:614.0px;top:387.0px" width="8" height="8"><rect x="0.5" y="0.5" width="7" height="7" fill="#222"/><path d="M2 2L6 6M6 2L2 6" stroke="#fff" stroke-width="1"/></svg>
<svg style="left:614.0px;top:397.0px" width="8" height="9"><path d="M1 8 L7 1 M1 8 H7.5 M5 6 L7 8" stroke="#111" stroke-width="1.2" fill="none"/></svg>
<div class="t" style="left:541.7px;top:412.2px;font-size:10.92px;letter-spacing:-0.12px;-webkit-text-stroke:0.2px #111;color:#111;">Segment</div>
<svg style="left:526.9px;top:411.2px" width="12" height="12"><circle cx="6" cy="6" r="4.95" fill="#eef000" stroke="#1a1a1a" stroke-width="1.1"/></svg>
<svg style="left:624.7px;top:401.2px" width="12" height="12"><circle cx="6" cy="6" r="4.95" fill="#eef000" stroke="#1a1a1a" stroke-width="1.1"/></svg>
</body></html>
